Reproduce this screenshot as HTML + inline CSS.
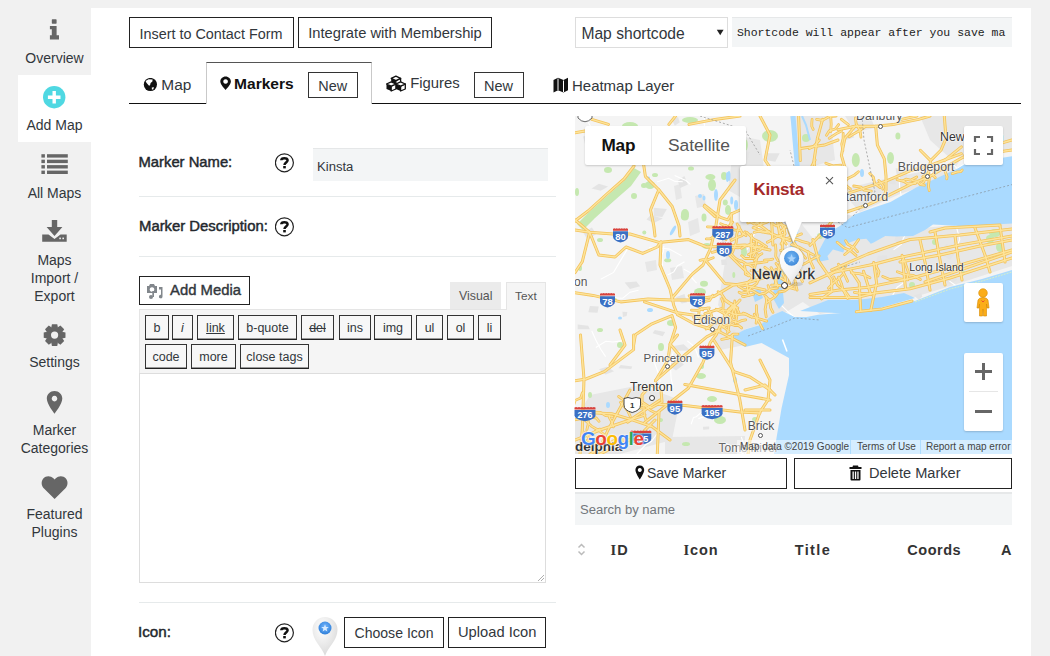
<!DOCTYPE html>
<html><head><meta charset="utf-8">
<style>
*{box-sizing:border-box;margin:0;padding:0}
html,body{width:1050px;height:656px;overflow:hidden;background:#f1f1f1;font-family:"Liberation Sans",sans-serif;color:#32373c;position:relative}
.a{position:absolute}
.t{position:absolute;line-height:1;white-space:nowrap;color:#32373c}
.qb{position:absolute;border:1px solid #333;border-bottom-color:#222;background:#f7f7f7;font-size:12.5px;text-align:center;line-height:24.5px;color:#32373c;box-shadow:inset 0 -1px 0 #999}
.ml{position:absolute;white-space:nowrap;color:#555;text-shadow:0 0 2px #fff,0 0 2px #fff,0 0 1px #fff}
.cd{position:absolute;width:5px;height:5px;border:1px solid #555;border-radius:50%;background:#fff}
.mctl{background:#fff;border-radius:2px;box-shadow:0 1px 2px rgba(0,0,0,0.18)}
.att{top:441px;font-size:10px;color:#444;white-space:nowrap}
</style></head><body>
<div class="a" style="left:91px;top:8px;width:940px;height:648px;background:#fff"></div>
<div class="a" style="left:18px;top:75px;width:73px;height:67px;background:#fff"></div>
<div class="t" style="left:0;width:109px;text-align:center;top:50.6px;font-size:14px;color:#32373c">Overview</div>
<div class="t" style="left:0;width:109px;text-align:center;top:118.1px;font-size:14px;color:#32373c">Add Map</div>
<div class="t" style="left:0;width:109px;text-align:center;top:185.9px;font-size:14px;color:#32373c">All Maps</div>
<div class="t" style="left:0;width:109px;text-align:center;top:253.3px;font-size:14px;color:#32373c">Maps</div>
<div class="t" style="left:0;width:109px;text-align:center;top:271.0px;font-size:14px;color:#32373c">Import /</div>
<div class="t" style="left:0;width:109px;text-align:center;top:288.6px;font-size:14px;color:#32373c">Export</div>
<div class="t" style="left:0;width:109px;text-align:center;top:355.4px;font-size:14px;color:#32373c">Settings</div>
<div class="t" style="left:0;width:109px;text-align:center;top:422.8px;font-size:14px;color:#32373c">Marker</div>
<div class="t" style="left:0;width:109px;text-align:center;top:440.9px;font-size:14px;color:#32373c">Categories</div>
<div class="t" style="left:0;width:109px;text-align:center;top:507.0px;font-size:14px;color:#32373c">Featured</div>
<div class="t" style="left:0;width:109px;text-align:center;top:525.2px;font-size:14px;color:#32373c">Plugins</div>
<svg class="a" style="left:0;top:0" width="91" height="656" viewBox="0 0 91 656">
<g fill="#666">
<rect x="51.8" y="19.3" width="4.8" height="4.4" rx="0.6"/>
<path d="M49.9,26 H56.6 V35.2 H59 V39.4 H49.9 V35.2 H51.8 V29.2 H49.9 Z"/>
<rect x="41.4" y="154.2" width="3.5" height="3.4"/><rect x="47" y="154.2" width="20.8" height="3.4"/>
<rect x="41.4" y="159.7" width="3.5" height="3.4"/><rect x="47" y="159.7" width="20.8" height="3.4"/>
<rect x="41.4" y="165.1" width="3.5" height="3.4"/><rect x="47" y="165.1" width="20.8" height="3.4"/>
<rect x="41.4" y="170.6" width="3.5" height="3.4"/><rect x="47" y="170.6" width="20.8" height="3.4"/>
<path d="M51.8,220 H57.2 V227 H62.4 L54.5,236 L46.6,227 H51.8 Z"/>
<path d="M42.2,234.5 H48.5 L54.5,239 L60.5,234.5 H66.7 V241.8 H42.2 Z"/>
<path d="M54.5,391 C50.2,391 46.8,394.3 46.8,398.6 C46.8,404 54.5,413.8 54.5,413.8 C54.5,413.8 62.3,404 62.3,398.6 C62.3,394.3 58.8,391 54.5,391 Z M54.5,395.8 A2.8,2.8 0 1 1 54.49,395.8 Z" fill-rule="evenodd"/>
<path d="M54.6,499 L44,488.5 C41.3,485.8 40.8,481.6 43.3,478.5 C45.9,475.4 50.6,475.4 53.4,478.3 L54.6,479.5 L55.8,478.3 C58.6,475.4 63.3,475.4 65.9,478.5 C68.4,481.6 67.9,485.8 65.2,488.5 Z"/>
</g>
<rect x="59.3" y="237.6" width="1.6" height="1.6" fill="#f1f1f1"/><rect x="62.4" y="237.6" width="1.6" height="1.6" fill="#f1f1f1"/>
<circle cx="54.2" cy="97.2" r="11.2" fill="#4fd8e2"/>
<path d="M47.9,97.2 H60.5 M54.2,90.9 V103.5" stroke="#fff" stroke-width="3.4"/>
</svg>
<svg class="a" style="left:0;top:0" width="91" height="656"><path d="M65.48,332.44 L65.48,337.76 L62.09,338.44 L62.26,338.03 L64.18,340.91 L60.41,344.68 L57.53,342.76 L57.94,342.59 L57.26,345.98 L51.94,345.98 L51.26,342.59 L51.67,342.76 L48.79,344.68 L45.02,340.91 L46.94,338.03 L47.11,338.44 L43.72,337.76 L43.72,332.44 L47.11,331.76 L46.94,332.17 L45.02,329.29 L48.79,325.52 L51.67,327.44 L51.26,327.61 L51.94,324.22 L57.26,324.22 L57.94,327.61 L57.53,327.44 L60.41,325.52 L64.18,329.29 L62.26,332.17 L62.09,331.76 Z M58.2,335.1 A3.6,3.6 0 1 0 51.0,335.1 A3.6,3.6 0 1 0 58.2,335.1 Z" fill="#666" fill-rule="evenodd"/></svg>
<div class="a" style="left:129px;top:17px;width:165px;height:31px;border:1px solid #222;background:#fff"></div>
<div class="t" style="left:139.50px;top:26.65px;font-size:14.393px;">Insert to Contact Form</div>
<div class="a" style="left:298px;top:17px;width:194px;height:31px;border:1px solid #222;background:#fff"></div>
<div class="t" style="left:308.20px;top:26.05px;font-size:14.745px;">Integrate with Membership</div>
<div class="a" style="left:575px;top:17px;width:153px;height:31px;border:1px solid #ddd;background:#fff"></div>
<div class="t" style="left:581.40px;top:26.41px;font-size:15.646px;">Map shortcode</div>
<svg class="a" style="left:716px;top:29px" width="9" height="7"><path d="M0.8,0.8 H7.6 L4.2,6.2 Z" fill="#222"/></svg>
<div class="a" style="left:732px;top:17px;width:280px;height:30px;background:#f3f5f6;border-top:1px solid #e6e8e9"></div>
<div class="t" style="left:736.90px;top:27.16px;font-size:11.488px;font-family:'Liberation Mono',monospace;color:#222;white-space:pre">Shortcode will appear after you save ma</div>
<div class="a" style="left:129px;top:103px;width:78px;height:1px;background:#111"></div>
<div class="a" style="left:371px;top:103px;width:650px;height:1px;background:#111"></div>
<div class="a" style="left:206px;top:62px;width:166px;height:42px;border:1px solid #c9c9c9;border-top:1px solid #555;border-bottom:none;background:#fff"></div>
<svg class="a" style="left:143px;top:78px" width="15" height="15" viewBox="0 0 15 15"><circle cx="7.4" cy="6.5" r="6.6" fill="#111"/><path d="M2.6,3 L5.6,1.3 L9.6,1.6 L9.4,3.6 L7.6,5 L7,7.4 L5.8,7.6 L3.4,4.8 Z" fill="#fff"/><path d="M8.8,9.4 L11,9.2 L10.2,11.4 L8.9,11.5 Z" fill="#fff"/></svg>
<div class="t" style="left:161.30px;top:76.98px;font-size:15.437px;">Map</div>
<svg class="a" style="left:220px;top:76px" width="12" height="15" viewBox="0 0 12 15"><path d="M5.6,0.4 C2.6,0.4 0.3,2.7 0.3,5.5 C0.3,8.8 5.6,13.9 5.6,13.9 C5.6,13.9 10.9,8.8 10.9,5.5 C10.9,2.7 8.6,0.4 5.6,0.4 Z M5.6,3.2 A2.3,2.3 0 1 1 5.59,3.2 Z" fill="#111" fill-rule="evenodd"/></svg>
<div class="t" style="left:234.10px;top:75.69px;font-size:15.542px;font-weight:bold;color:#111">Markers</div>
<div class="a" style="left:308px;top:72px;width:50px;height:26px;border:1px solid #333;background:#fff"></div>
<div class="t" style="left:318.30px;top:79.12px;font-size:14.424px;">New</div>
<svg class="a" style="left:386px;top:75px" width="20" height="17" viewBox="0 0 20 17"><path d="M5.2,3.4000000000000004 L9.9,5.6000000000000005 L9.9,10.4 L5.2,8.4 Z" fill="#111"/><path d="M9.9,5.6000000000000005 L14.600000000000001,3.4000000000000004 L14.600000000000001,8.4 L9.9,10.4 Z" fill="#fff" stroke="#111" stroke-width="1.3" stroke-linejoin="round"/><path d="M5.2,3.4000000000000004 L9.9,1.2000000000000002 L14.600000000000001,3.4000000000000004 L9.9,5.6000000000000005 Z" fill="#fff" stroke="#111" stroke-width="1.3" stroke-linejoin="round"/><path d="M0.5,9 L5.2,11.2 L5.2,16 L0.5,14 Z" fill="#111"/><path d="M5.2,11.2 L9.9,9 L9.9,14 L5.2,16 Z" fill="#fff" stroke="#111" stroke-width="1.3" stroke-linejoin="round"/><path d="M0.5,9 L5.2,6.8 L9.9,9 L5.2,11.2 Z" fill="#fff" stroke="#111" stroke-width="1.3" stroke-linejoin="round"/><path d="M9.899999999999999,9 L14.6,11.2 L14.6,16 L9.899999999999999,14 Z" fill="#111"/><path d="M14.6,11.2 L19.3,9 L19.3,14 L14.6,16 Z" fill="#fff" stroke="#111" stroke-width="1.3" stroke-linejoin="round"/><path d="M9.899999999999999,9 L14.6,6.8 L19.3,9 L14.6,11.2 Z" fill="#fff" stroke="#111" stroke-width="1.3" stroke-linejoin="round"/></svg>
<div class="t" style="left:410.20px;top:76.33px;font-size:14.899px;">Figures</div>
<div class="a" style="left:474px;top:72px;width:50px;height:26px;border:1px solid #333;background:#fff"></div>
<div class="t" style="left:484.00px;top:78.94px;font-size:14.519px;">New</div>
<svg class="a" style="left:553px;top:77px" width="16" height="16" viewBox="0 0 16 16"><path d="M0.5,3 L5,0.8 L10.5,3 L15,0.8 V13.2 L10.5,15.4 L5,13.2 L0.5,15.4 Z" fill="#111"/><path d="M5,1.5 V13 M10.5,3.5 V15" stroke="#fff" stroke-width="1"/></svg>
<div class="t" style="left:572.00px;top:78.57px;font-size:14.970px;">Heatmap Layer</div>
<div class="t" style="left:138.50px;top:154.90px;font-size:14.805px;-webkit-text-stroke:0.45px #23282d;color:#23282d">Marker Name:</div>
<svg class="a" style="left:274.5px;top:152.8px" width="20" height="20" viewBox="0 0 20 20"><circle cx="9.4" cy="9.8" r="9" fill="#fff" stroke="#222" stroke-width="1.2"/><path d="M6.3,7.3 C6.3,4.4 12.6,4.4 12.6,7.3 C12.6,9.4 9.5,9.6 9.5,12" fill="none" stroke="#111" stroke-width="2.5"/><rect x="8.2" y="13" width="2.6" height="2.4" fill="#111"/></svg>
<div class="a" style="left:313px;top:148px;width:235px;height:33px;background:#f3f5f6;border-top:1px solid #e5e7e8"></div>
<div class="t" style="left:317.00px;top:159.83px;font-size:13.087px;color:#32373c">Kinsta</div>
<div class="a" style="left:139px;top:196px;width:417px;height:1px;background:#e6eaeb"></div>
<div class="t" style="left:139.00px;top:218.85px;font-size:14.876px;-webkit-text-stroke:0.45px #23282d;color:#23282d">Marker Description:</div>
<svg class="a" style="left:274.5px;top:216.8px" width="20" height="20" viewBox="0 0 20 20"><circle cx="9.4" cy="9.8" r="9" fill="#fff" stroke="#222" stroke-width="1.2"/><path d="M6.3,7.3 C6.3,4.4 12.6,4.4 12.6,7.3 C12.6,9.4 9.5,9.6 9.5,12" fill="none" stroke="#111" stroke-width="2.5"/><rect x="8.2" y="13" width="2.6" height="2.4" fill="#111"/></svg>
<div class="a" style="left:139px;top:256px;width:417px;height:1px;background:#e6eaeb"></div>
<div class="a" style="left:139px;top:276px;width:111px;height:29px;border:1px solid #222;background:#fff"></div>
<svg class="a" style="left:146px;top:283px" width="18" height="17" viewBox="0 0 18 17"><g fill="#82878c"><path d="M1,3 H3 L4,1 H8 L9,3 H11 V10 H1 Z M6,4.2 A2.3,2.3 0 1 0 6.01,4.2 Z" fill-rule="evenodd"/><path d="M13,4 H16.5 V13.5 A1.8,1.8 0 1 1 15,11.8 V6.5 H13 Z"/><circle cx="5" cy="14" r="2"/><path d="M6.3,8 H8 V14 H6.3 Z"/></g></svg>
<div class="t" style="left:170.10px;top:283.48px;font-size:14.831px;-webkit-text-stroke:0.4px #32373c;color:#32373c">Add Media</div>
<div class="a" style="left:450px;top:282px;width:51px;height:27px;background:#ebebeb"></div>
<div class="t" style="left:459.00px;top:289.72px;font-size:12.375px;color:#555">Visual</div>
<div class="a" style="left:139px;top:309px;width:407px;height:65px;background:#f5f5f5;border:1px solid #e5e5e5;border-bottom:none"></div>
<div class="a" style="left:506px;top:282px;width:40px;height:28px;background:#f5f5f5;border:1px solid #e5e5e5;border-bottom:none"></div>
<div class="t" style="left:515.10px;top:291.19px;font-size:11.811px;color:#555">Text</div>
<div class="qb" style="left:145px;top:315px;width:24px;height:25px;">b</div>
<div class="qb" style="left:172px;top:315px;width:21px;height:25px;font-style:italic">i</div>
<div class="qb" style="left:197px;top:315px;width:37px;height:25px;text-decoration:underline">link</div>
<div class="qb" style="left:238px;top:315px;width:59px;height:25px;">b-quote</div>
<div class="qb" style="left:301px;top:315px;width:33px;height:25px;text-decoration:line-through">del</div>
<div class="qb" style="left:339px;top:315px;width:32px;height:25px;">ins</div>
<div class="qb" style="left:374px;top:315px;width:38px;height:25px;">img</div>
<div class="qb" style="left:416px;top:315px;width:27px;height:25px;">ul</div>
<div class="qb" style="left:447px;top:315px;width:27px;height:25px;">ol</div>
<div class="qb" style="left:478px;top:315px;width:23px;height:25px;">li</div>
<div class="qb" style="left:145px;top:344px;width:42px;height:25px">code</div>
<div class="qb" style="left:191px;top:344px;width:45px;height:25px">more</div>
<div class="qb" style="left:240px;top:344px;width:69px;height:25px">close tags</div>
<div class="a" style="left:139px;top:373px;width:407px;height:210px;border:1px solid #ddd;background:#fff"></div>
<svg class="a" style="left:537px;top:574px" width="8" height="8"><path d="M7,1 L1,7 M7,4 L4,7" stroke="#999" stroke-width="0.8"/></svg>
<div class="a" style="left:139px;top:602px;width:417px;height:1px;background:#e6eaeb"></div>
<div class="t" style="left:138.00px;top:624.07px;font-size:15.202px;-webkit-text-stroke:0.45px #23282d;color:#23282d">Icon:</div>
<svg class="a" style="left:274.5px;top:622.5px" width="20" height="20" viewBox="0 0 20 20"><circle cx="9.4" cy="9.8" r="9" fill="#fff" stroke="#222" stroke-width="1.2"/><path d="M6.3,7.3 C6.3,4.4 12.6,4.4 12.6,7.3 C12.6,9.4 9.5,9.6 9.5,12" fill="none" stroke="#111" stroke-width="2.5"/><rect x="8.2" y="13" width="2.6" height="2.4" fill="#111"/></svg>
<svg class="a" style="left:311px;top:616px" width="28" height="40" viewBox="0 0 28 40"><defs><radialGradient id="pg2" cx="0.4" cy="0.3" r="0.8"><stop offset="0" stop-color="#fff"/><stop offset="1" stop-color="#d5d5d5"/></radialGradient><radialGradient id="bg2" cx="0.5" cy="0.4" r="0.6"><stop offset="0" stop-color="#72b6ff"/><stop offset="1" stop-color="#2f7fd8"/></radialGradient></defs><path d="M14,40 C10.5,30 1.5,25 1.5,13.5 A12.5,12.5 0 0 1 26.5,13.5 C26.5,25 17.5,30 14,40 Z" fill="url(#pg2)"/><circle cx="14" cy="12" r="6.5" fill="url(#bg2)"/><path d="M14,8.2 L15,11 L17.8,11.1 L15.6,12.8 L16.4,15.6 L14,14 L11.6,15.6 L12.4,12.8 L10.2,11.1 L13,11 Z" fill="#d8ebff"/></svg>
<div class="a" style="left:344px;top:617px;width:100px;height:31px;border:1px solid #222;background:#fff"></div>
<div class="t" style="left:354.50px;top:626.21px;font-size:14.075px;">Choose Icon</div>
<div class="a" style="left:448px;top:617px;width:98px;height:31px;border:1px solid #222;background:#fff"></div>
<div class="t" style="left:458.00px;top:625.38px;font-size:14.715px;">Upload Icon</div>
<svg class="a" style="left:575px;top:116px" width="437" height="338" viewBox="575 116 437 338"><rect x="575" y="116" width="437" height="338" fill="#f4f4f4"/><polygon points="735.0,135.0 760.0,140.0 765.0,175.0 745.0,200.0 728.0,190.0" fill="#e7e7e7" /><polygon points="688.0,222.0 698.0,218.0 700.0,232.0 690.0,236.0" fill="#e7e7e7" /><polygon points="674.0,186.0 680.0,184.0 682.0,198.0 676.0,200.0" fill="#e7e7e7" /><polygon points="695.0,196.0 704.0,194.0 706.0,206.0 697.0,208.0" fill="#e7e7e7" /><polygon points="670.0,268.0 682.0,266.0 684.0,278.0 672.0,280.0" fill="#e7e7e7" /><polygon points="645.0,262.0 656.0,260.0 657.0,270.0 647.0,272.0" fill="#e7e7e7" /><polygon points="732.0,222.0 800.0,222.0 822.0,250.0 806.0,300.0 770.0,322.0 735.0,332.0 718.0,305.0 725.0,262.0" fill="#e7e7e7" /><polygon points="815.0,236.0 900.0,230.0 1012.0,220.0 1012.0,266.0 960.0,283.0 905.0,300.0 820.0,314.0 800.0,300.0" fill="#e7e7e7" /><polygon points="840.0,190.0 880.0,180.0 930.0,170.0 960.0,160.0 950.0,176.0 900.0,194.0 860.0,212.0" fill="#e7e7e7" /><polygon points="845.0,116.0 870.0,116.0 875.0,128.0 855.0,132.0" fill="#e7e7e7" /><polygon points="790.0,116.0 830.0,116.0 835.0,160.0 800.0,170.0" fill="#e7e7e7" /><polygon points="590.0,395.0 640.0,385.0 680.0,400.0 672.0,440.0 620.0,454.0 575.0,454.0 575.0,420.0" fill="#e7e7e7" /><polygon points="665.0,437.0 745.0,436.0 745.0,454.0 665.0,454.0" fill="#e7e7e7" /><polygon points="920.0,116.0 1012.0,116.0 1012.0,150.0 950.0,158.0 930.0,140.0" fill="#e7e7e7" /><polygon points="705.0,320.0 745.0,310.0 745.0,345.0 720.0,350.0" fill="#e7e7e7" /><polygon points="681.8,303.5 675.6,297.3 684.5,294.0 686.9,302.5" fill="#e4e4e4" /><polygon points="614.1,371.3 605.6,374.6 599.0,369.2 606.8,366.8" fill="#e4e4e4" /><polygon points="852.2,223.9 842.0,220.1 844.7,214.3 855.9,216.4" fill="#e4e4e4" /><polygon points="822.6,214.5 826.0,209.1 829.4,214.6 825.8,222.2" fill="#e4e4e4" /><polygon points="719.4,146.2 708.4,147.3 707.3,143.8 717.7,143.0" fill="#e4e4e4" /><polygon points="800.6,264.5 791.7,265.3 794.8,259.3 804.3,260.4" fill="#e4e4e4" /><polygon points="595.2,144.1 585.1,144.2 583.1,136.5 595.0,133.4" fill="#e4e4e4" /><polygon points="688.0,184.6 680.1,187.9 677.7,181.1 684.3,175.9" fill="#e4e4e4" /><polygon points="653.7,216.2 653.7,207.8 666.9,208.9 662.3,217.0" fill="#e4e4e4" /><polygon points="676.0,370.4 667.9,365.0 678.3,359.7 684.0,364.6" fill="#e4e4e4" /><polygon points="653.9,223.0 646.5,219.4 650.6,214.9 662.9,218.4" fill="#e4e4e4" /><polygon points="589.9,329.3 577.7,329.2 577.7,324.6 588.2,325.7" fill="#e4e4e4" /><polygon points="736.0,336.2 728.3,337.0 724.8,331.1 735.2,329.9" fill="#e4e4e4" /><polygon points="888.1,260.9 876.2,261.0 877.6,256.1 886.8,255.2" fill="#e4e4e4" /><polygon points="622.9,317.0 622.4,311.8 627.4,312.1 626.6,315.9" fill="#e4e4e4" /><polygon points="631.2,368.9 618.5,368.2 620.7,365.1 632.3,366.5" fill="#e4e4e4" /><polygon points="897.4,178.8 895.6,168.3 905.3,169.0 907.3,176.1" fill="#e4e4e4" /><polygon points="673.8,350.7 673.6,346.0 683.6,344.3 690.4,350.4" fill="#e4e4e4" /><polygon points="950.2,259.7 939.2,253.6 946.7,243.8 955.2,252.8" fill="#e4e4e4" /><polygon points="620.6,153.1 609.5,152.9 615.5,147.8 624.6,147.7" fill="#e4e4e4" /><polygon points="963.8,154.6 966.6,147.6 978.4,148.6 978.2,155.5" fill="#e4e4e4" /><polygon points="652.6,333.3 654.8,329.9 665.1,331.9 662.8,336.3" fill="#e4e4e4" /><polygon points="894.2,241.1 895.9,234.7 902.5,237.9 900.1,242.4" fill="#e4e4e4" /><polygon points="888.7,183.5 889.9,177.8 894.9,179.0 895.8,184.6" fill="#e4e4e4" /><polygon points="957.3,279.8 949.9,284.3 942.2,279.9 952.1,273.1" fill="#e4e4e4" /><polygon points="854.5,137.3 846.4,140.0 842.7,135.5 850.8,133.6" fill="#e4e4e4" /><polygon points="908.7,280.7 904.5,282.3 901.2,279.7 907.5,277.6" fill="#e4e4e4" /><polygon points="679.8,122.3 674.8,125.8 671.9,120.0 678.0,116.9" fill="#e4e4e4" /><polygon points="756.4,254.4 751.9,258.0 750.1,245.6 755.0,243.9" fill="#e4e4e4" /><polygon points="847.7,235.4 849.7,228.1 853.7,234.8 850.1,238.1" fill="#e4e4e4" /><polygon points="714.2,322.2 701.4,322.7 705.7,317.5 717.6,317.9" fill="#e4e4e4" /><polygon points="784.9,213.5 783.7,206.9 788.1,202.2 791.3,211.9" fill="#e4e4e4" /><polygon points="720.0,243.4 723.3,238.9 727.3,240.6 723.1,246.3" fill="#e4e4e4" /><polygon points="922.3,296.5 918.8,299.8 914.0,295.5 921.2,293.2" fill="#e4e4e4" /><polygon points="765.3,159.9 765.7,153.2 779.7,153.3 775.3,161.7" fill="#e4e4e4" /><polygon points="727.1,265.1 721.6,265.0 721.0,259.8 726.4,259.3" fill="#e4e4e4" /><polygon points="703.2,429.8 703.0,426.7 709.2,426.4 709.1,429.3" fill="#e4e4e4" /><polygon points="957.2,247.4 952.7,242.4 955.9,240.0 960.8,242.6" fill="#e4e4e4" /><polygon points="591.6,188.6 598.8,183.8 608.1,186.6 600.7,190.8" fill="#e4e4e4" /><polygon points="760.2,330.4 759.8,322.0 768.7,323.0 767.3,334.3" fill="#e4e4e4" /><polygon points="754.8,293.7 754.0,289.0 759.6,288.5 761.7,293.6" fill="#e4e4e4" /><polygon points="597.5,312.7 588.3,312.2 589.9,306.0 598.8,306.6" fill="#e4e4e4" /><polygon points="718.4,251.0 713.9,251.7 712.7,248.3 719.9,247.1" fill="#e4e4e4" /><polygon points="691.2,301.6 695.1,297.6 698.1,298.9 694.9,303.8" fill="#e4e4e4" /><polygon points="748.1,159.4 740.4,162.0 741.7,150.9 749.6,151.8" fill="#e4e4e4" /><polygon points="587.6,240.1 583.0,232.0 591.9,227.6 596.2,234.1" fill="#e4e4e4" /><polygon points="1010.4,256.1 1000.1,258.0 993.5,254.8 1001.1,252.3" fill="#e4e4e4" /><polygon points="629.9,288.9 624.6,282.5 636.4,281.5 640.1,286.2" fill="#e4e4e4" /><polyline points="741.3,436.8 743.3,442.9 747.8,446.1 748.1,453.2" fill="none" stroke="#fff" stroke-width="1.1"/><polyline points="760.5,224.4 752.7,236.7 749.4,246.2 740.6,258.3" fill="none" stroke="#fff" stroke-width="1.1"/><polyline points="704.2,112.3 704.4,125.5 703.4,135.7 700.5,146.3" fill="none" stroke="#fff" stroke-width="1.1"/><polyline points="955.7,224.4 959.8,239.2 956.4,248.2 959.0,260.4" fill="none" stroke="#fff" stroke-width="1.1"/><polyline points="930.0,170.8 936.0,178.4 940.2,181.3 948.9,191.1" fill="none" stroke="#fff" stroke-width="1.1"/><polyline points="627.5,248.9 620.5,260.6 613.6,272.4 600.7,279.2" fill="none" stroke="#fff" stroke-width="1.1"/><polyline points="649.1,247.7 662.0,248.3 669.3,249.1 681.6,255.7" fill="none" stroke="#fff" stroke-width="1.1"/><polyline points="827.7,211.2 815.8,216.0 804.3,214.4 796.8,214.0" fill="none" stroke="#fff" stroke-width="1.1"/><polyline points="663.3,130.8 665.0,138.0 671.0,141.2 672.4,150.3" fill="none" stroke="#fff" stroke-width="1.1"/><polyline points="656.8,182.0 668.6,178.3 675.1,181.4 682.8,181.7" fill="none" stroke="#fff" stroke-width="1.1"/><polyline points="687.3,340.9 692.2,344.9 695.9,350.0 698.5,357.5" fill="none" stroke="#fff" stroke-width="1.1"/><polyline points="651.5,355.2 653.7,360.7 658.8,374.5 660.2,381.8" fill="none" stroke="#fff" stroke-width="1.1"/><polyline points="703.0,410.9 696.4,416.7 693.5,417.5 691.1,424.2" fill="none" stroke="#fff" stroke-width="1.1"/><polyline points="638.5,290.3 630.0,292.2 622.8,298.2 612.5,297.9" fill="none" stroke="#fff" stroke-width="1.1"/><polyline points="726.4,411.3 716.1,411.5 702.8,417.2 698.3,418.6" fill="none" stroke="#fff" stroke-width="1.1"/><polyline points="774.8,295.0 779.7,303.7 788.6,312.3 795.4,318.0" fill="none" stroke="#fff" stroke-width="1.1"/><polyline points="663.8,246.0 663.3,251.9 661.7,255.2 662.5,265.9" fill="none" stroke="#fff" stroke-width="1.1"/><polyline points="949.5,281.1 955.2,285.2 957.0,292.6 955.7,296.6" fill="none" stroke="#fff" stroke-width="1.1"/><polyline points="995.2,166.2 997.8,178.6 994.3,188.3 988.4,196.2" fill="none" stroke="#fff" stroke-width="1.1"/><polyline points="899.0,176.4 899.8,188.9 902.2,200.9 904.6,216.1" fill="none" stroke="#fff" stroke-width="1.1"/><polyline points="909.2,274.2 902.9,283.3 897.2,287.2 891.2,297.9" fill="none" stroke="#fff" stroke-width="1.1"/><polyline points="673.3,352.1 670.2,361.0 671.1,378.1 673.1,387.8" fill="none" stroke="#fff" stroke-width="1.1"/><polyline points="658.8,431.5 651.5,441.3 645.7,444.8 636.7,454.2" fill="none" stroke="#fff" stroke-width="1.1"/><polyline points="953.4,164.7 957.2,168.5 963.8,164.2 970.0,162.8" fill="none" stroke="#fff" stroke-width="1.1"/><polyline points="694.4,345.5 701.6,346.8 705.1,351.2 709.7,354.3" fill="none" stroke="#fff" stroke-width="1.1"/><polyline points="684.5,261.8 677.3,265.9 673.8,271.9 667.6,275.0" fill="none" stroke="#fff" stroke-width="1.1"/><polyline points="586.2,118.6 590.6,126.4 593.2,133.1 595.6,137.0" fill="none" stroke="#fff" stroke-width="1.1"/><polyline points="721.2,135.0 716.8,138.7 708.6,141.3 704.6,147.1" fill="none" stroke="#fff" stroke-width="1.1"/><polyline points="724.6,443.1 735.8,447.6 738.8,451.3 747.3,456.2" fill="none" stroke="#fff" stroke-width="1.1"/><polyline points="591.7,330.7 595.8,339.9 600.7,349.3 605.6,356.6" fill="none" stroke="#fff" stroke-width="1.1"/><polyline points="673.8,137.4 666.4,141.7 660.1,151.0 655.3,154.8" fill="none" stroke="#fff" stroke-width="1.1"/><polyline points="623.1,340.6 612.9,342.0 605.8,341.3 595.8,347.5" fill="none" stroke="#fff" stroke-width="1.1"/><polyline points="683.6,269.0 691.0,273.1 692.0,278.0 696.6,283.2" fill="none" stroke="#fff" stroke-width="1.1"/><polyline points="674.6,175.5 683.0,179.3 686.0,180.5 690.4,184.3" fill="none" stroke="#fff" stroke-width="1.1"/><polyline points="908.4,230.1 903.5,237.9 901.5,244.1 893.5,249.9" fill="none" stroke="#fff" stroke-width="1.1"/><polyline points="784.0,231.4 786.6,241.9 788.1,247.4 787.9,259.6" fill="none" stroke="#fff" stroke-width="1.1"/><polygon points="577.0,224.0 588.0,213.0 608.0,195.0 624.0,181.0 634.0,168.0 641.0,172.0 631.0,186.0 615.0,200.0 595.0,218.0 583.0,230.0" fill="#c5e8b0" /><ellipse cx="644" cy="185.6" rx="3" ry="2.5" fill="#c5e8b0" /><ellipse cx="684.8" cy="216.5" rx="4" ry="4" fill="#c5e8b0" /><ellipse cx="704" cy="217.6" rx="2.5" ry="4" fill="#c5e8b0" /><ellipse cx="710.4" cy="177" rx="5" ry="3" fill="#c5e8b0" /><ellipse cx="725.3" cy="202.6" rx="2.5" ry="3" fill="#c5e8b0" /><ellipse cx="667.7" cy="260.2" rx="3.5" ry="2" fill="#c5e8b0" /><ellipse cx="704" cy="283.7" rx="4" ry="3" fill="#c5e8b0" /><ellipse cx="733.8" cy="275" rx="1.5" ry="3" fill="#c5e8b0" /><ellipse cx="644.3" cy="232.5" rx="2" ry="2" fill="#c5e8b0" /><ellipse cx="746.6" cy="177" rx="3" ry="3" fill="#c5e8b0" /><ellipse cx="691" cy="168.5" rx="3" ry="2" fill="#c5e8b0" /><ellipse cx="600" cy="330" rx="3" ry="2" fill="#c5e8b0" /><ellipse cx="590" cy="395" rx="2" ry="3" fill="#c5e8b0" /><ellipse cx="615" cy="300" rx="2" ry="2" fill="#c5e8b0" /><ellipse cx="655" cy="175" rx="3" ry="2" fill="#c5e8b0" /><ellipse cx="855.8" cy="160" rx="4" ry="7" fill="#c5e8b0" /><ellipse cx="890.5" cy="158" rx="3.5" ry="6" fill="#c5e8b0" /><ellipse cx="897.9" cy="136" rx="2.5" ry="3.5" fill="#c5e8b0" /><ellipse cx="650" cy="185" rx="5" ry="4" fill="#c5e8b0" /><ellipse cx="685" cy="214" rx="4" ry="5" fill="#c5e8b0" /><ellipse cx="728" cy="210" rx="3" ry="5" fill="#c5e8b0" /><ellipse cx="707" cy="246" rx="5" ry="3" fill="#c5e8b0" /><ellipse cx="744" cy="252" rx="3" ry="5" fill="#c5e8b0" /><ellipse cx="700" cy="292" rx="6" ry="4" fill="#c5e8b0" /><ellipse cx="671" cy="323" rx="4" ry="3" fill="#c5e8b0" /><ellipse cx="661" cy="347" rx="3" ry="4" fill="#c5e8b0" /><ellipse cx="702" cy="366" rx="2" ry="3" fill="#c5e8b0" /><ellipse cx="701" cy="376" rx="5" ry="3" fill="#c5e8b0" /><ellipse cx="712" cy="399" rx="5" ry="3" fill="#c5e8b0" /><ellipse cx="720" cy="420" rx="6" ry="4" fill="#c5e8b0" /><ellipse cx="630" cy="126" rx="8" ry="4" fill="#c5e8b0" /><ellipse cx="690" cy="120" rx="8" ry="3" fill="#c5e8b0" /><ellipse cx="608" cy="170" rx="4" ry="3" fill="#c5e8b0" /><ellipse cx="634" cy="196" rx="3" ry="3" fill="#c5e8b0" /><ellipse cx="600" cy="240" rx="3" ry="2" fill="#c5e8b0" /><ellipse cx="580" cy="268" rx="2" ry="3" fill="#c5e8b0" /><ellipse cx="770" cy="136" rx="8" ry="6" fill="#c5e8b0" /><ellipse cx="745" cy="145" rx="3" ry="6" fill="#c5e8b0" /><ellipse cx="995" cy="233" rx="6" ry="4" fill="#c5e8b0" /><ellipse cx="990" cy="239" rx="4" ry="4" fill="#c5e8b0" /><ellipse cx="1000" cy="247" rx="4" ry="5" fill="#c5e8b0" /><ellipse cx="935" cy="242" rx="3" ry="3" fill="#c5e8b0" /><ellipse cx="962" cy="273" rx="3" ry="3" fill="#c5e8b0" /><ellipse cx="912" cy="285" rx="3" ry="3" fill="#c5e8b0" /><ellipse cx="858" cy="235" rx="4" ry="3" fill="#c5e8b0" /><ellipse cx="620" cy="345" rx="3" ry="3" fill="#c5e8b0" /><ellipse cx="638" cy="407" rx="4" ry="3" fill="#c5e8b0" /><ellipse cx="780" cy="343" rx="3" ry="4" fill="#c5e8b0" /><ellipse cx="755" cy="420" rx="3" ry="3" fill="#c5e8b0" /><ellipse cx="820" cy="236" rx="3" ry="3" fill="#c5e8b0" /><ellipse cx="712" cy="185" rx="4" ry="6" fill="#c5e8b0" /><ellipse cx="724" cy="176" rx="3" ry="4" fill="#c5e8b0" /><ellipse cx="740" cy="135" rx="4" ry="8" fill="#c5e8b0" /><ellipse cx="765" cy="180" rx="6" ry="4" fill="#c5e8b0" /><ellipse cx="806" cy="138" rx="4" ry="4" fill="#c5e8b0" /><ellipse cx="590" cy="150" rx="2" ry="4" fill="#c5e8b0" /><ellipse cx="577" cy="192" rx="2" ry="4" fill="#c5e8b0" /><ellipse cx="660" cy="420" rx="3" ry="2" fill="#c5e8b0" /><ellipse cx="686" cy="444" rx="4" ry="2" fill="#c5e8b0" /><polygon points="774.0,454.0 776.0,441.0 781.6,408.0 789.0,375.0 789.0,358.0 761.5,343.0 745.0,347.0 736.0,342.0 733.5,335.4 745.7,329.3 761.0,324.7 771.6,315.5 782.3,311.0 794.5,317.0 806.7,317.0 818.2,314.7 854.8,311.9 882.0,309.0 915.0,301.0 950.0,287.0 982.0,279.0 1012.0,270.0 1012.0,454.0" fill="#aadaff" /><polygon points="773.0,283.0 779.0,281.0 783.0,292.0 784.0,303.0 779.0,309.0 774.0,300.0" fill="#aadaff" /><polygon points="752.0,292.0 760.0,288.0 763.0,298.0 755.0,302.0" fill="#aadaff" /><polygon points="818.0,262.0 828.8,259.7 827.4,256.1 833.0,249.6 843.3,252.5 846.2,243.8 857.8,239.5 866.4,238.7 870.8,243.8 873.7,242.4 885.3,235.9 896.8,236.6 913.0,236.0 925.0,230.0 933.0,224.5 960.0,226.0 978.0,225.5 1012.0,223.5 1012.0,156.2 966.0,163.6 956.8,169.0 940.4,176.4 916.6,187.3 890.5,202.0 874.0,207.5 854.0,214.8 840.0,226.0 828.8,232.0 817.2,254.0 812.0,258.0" fill="#aadaff" /><polygon points="800.0,311.0 828.0,300.0 856.0,300.0 882.0,297.0 904.0,293.0 915.0,298.0 880.0,308.0 853.0,314.0" fill="#aadaff" /><polyline points="793.0,116.0 795.0,140.0 797.0,162.0 798.0,200.0 797.0,225.0 792.0,250.0 786.0,270.0 778.0,285.0" fill="none" stroke="#aadaff" stroke-width="5"/><polyline points="802.0,116.0 806.0,125.0 810.0,140.0" fill="none" stroke="#aadaff" stroke-width="2"/><ellipse cx="673" cy="230.4" rx="1.6" ry="5.5" fill="#aadaff" transform="rotate(30 673 230.4)"/><ellipse cx="727.4" cy="177" rx="1.5" ry="5" fill="#aadaff" /><ellipse cx="731.7" cy="200.5" rx="1.5" ry="4" fill="#aadaff" /><ellipse cx="648.5" cy="178" rx="1.5" ry="1.5" fill="#aadaff" /><ellipse cx="716" cy="195" rx="2" ry="6" fill="#aadaff" /><ellipse cx="712" cy="156" rx="2" ry="4" fill="#aadaff" /><ellipse cx="650" cy="310" rx="3" ry="2" fill="#aadaff" /><ellipse cx="668" cy="255" rx="2" ry="4" fill="#aadaff" /><ellipse cx="700" cy="196" rx="2" ry="2" fill="#aadaff" /><ellipse cx="862" cy="173" rx="2" ry="4" fill="#aadaff" /><ellipse cx="735" cy="380" rx="2" ry="3" fill="#aadaff" /><ellipse cx="705" cy="322" rx="2" ry="2" fill="#aadaff" /><ellipse cx="736" cy="205" rx="2" ry="5" fill="#aadaff" /><ellipse cx="729" cy="176" rx="1.5" ry="5" fill="#aadaff" /><ellipse cx="704" cy="198" rx="1.5" ry="2.5" fill="#aadaff" /><ellipse cx="620" cy="318" rx="2" ry="1.5" fill="#aadaff" /><ellipse cx="608" cy="405" rx="2" ry="3" fill="#aadaff" /><polyline points="782.5,339.6 787,351.5" fill="none" stroke="#fff" stroke-width="1.5"/><polyline points="575.0,230.0 589.6,232.3 613.0,234.0 630.0,234.0 659.0,242.4 688.5,239.6 706.7,247.0 745.0,245.0 770.0,250.0" fill="none" stroke="#f3c35c" stroke-width="3.0" stroke-linejoin="round" stroke-linecap="round"/><polyline points="589.6,232.3 598.8,255.0 615.0,257.0 626.0,247.0 642.7,253.4 657.3,247.0 661.0,242.0" fill="none" stroke="#f3c35c" stroke-width="3.0" stroke-linejoin="round" stroke-linecap="round"/><polyline points="589.6,232.3 582.3,261.6 575.0,272.6" fill="none" stroke="#f3c35c" stroke-width="3.0" stroke-linejoin="round" stroke-linecap="round"/><polyline points="589.6,232.3 580.0,224.0 575.0,220.0" fill="none" stroke="#f3c35c" stroke-width="3.0" stroke-linejoin="round" stroke-linecap="round"/><polyline points="575.0,292.7 593.0,295.4 620.7,301.9 648.0,299.0 672.0,300.0 690.0,300.0 714.0,296.4 732.4,285.4 750.0,282.0 770.0,276.0" fill="none" stroke="#f3c35c" stroke-width="3.0" stroke-linejoin="round" stroke-linecap="round"/><polyline points="661.0,242.0 660.0,265.0 670.0,289.0 673.8,305.5 677.5,314.7 694.0,323.8 720.0,332.0 745.0,345.0" fill="none" stroke="#f3c35c" stroke-width="3.0" stroke-linejoin="round" stroke-linecap="round"/><polyline points="672.0,298.0 692.0,274.4 703.0,265.0 710.4,248.8 714.0,234.0 716.0,225.0 720.0,200.0 735.0,180.0" fill="none" stroke="#f3c35c" stroke-width="3.0" stroke-linejoin="round" stroke-linecap="round"/><polyline points="644.5,301.9 677.5,312.8 703.0,316.5 720.0,322.0" fill="none" stroke="#f3c35c" stroke-width="3.0" stroke-linejoin="round" stroke-linecap="round"/><polyline points="633.6,345.0 635.4,334.8 651.9,323.8 672.0,315.6 675.6,327.5 670.0,345.0 668.0,360.0 655.5,380.7" fill="none" stroke="#f3c35c" stroke-width="3.0" stroke-linejoin="round" stroke-linecap="round"/><polyline points="706.7,261.6 725.0,283.6 745.0,285.4 765.0,290.0" fill="none" stroke="#f3c35c" stroke-width="3.0" stroke-linejoin="round" stroke-linecap="round"/><polyline points="721.4,247.0 739.7,265.3 755.0,280.0" fill="none" stroke="#f3c35c" stroke-width="3.0" stroke-linejoin="round" stroke-linecap="round"/><polyline points="575.0,221.0 588.0,211.0 608.0,193.0 624.0,179.0 634.0,166.0" fill="none" stroke="#f3c35c" stroke-width="3.0" stroke-linejoin="round" stroke-linecap="round"/><polyline points="643.7,165.0 645.4,176.4 658.8,189.8 650.5,209.9 653.8,226.0 655.0,236.0" fill="none" stroke="#f3c35c" stroke-width="3.0" stroke-linejoin="round" stroke-linecap="round"/><polyline points="658.8,189.8 672.2,206.5 679.0,226.0 680.0,236.0" fill="none" stroke="#f3c35c" stroke-width="3.0" stroke-linejoin="round" stroke-linecap="round"/><polyline points="591.8,119.4 608.5,124.4" fill="none" stroke="#f3c35c" stroke-width="3.0" stroke-linejoin="round" stroke-linecap="round"/><polyline points="575.0,132.8 585.0,131.0" fill="none" stroke="#f3c35c" stroke-width="3.0" stroke-linejoin="round" stroke-linecap="round"/><polyline points="668.9,124.4 675.6,116.0" fill="none" stroke="#f3c35c" stroke-width="3.0" stroke-linejoin="round" stroke-linecap="round"/><polyline points="689.0,124.4 715.0,119.4 740.0,116.0" fill="none" stroke="#f3c35c" stroke-width="3.0" stroke-linejoin="round" stroke-linecap="round"/><polyline points="704.1,206.5 715.0,216.6" fill="none" stroke="#f3c35c" stroke-width="3.0" stroke-linejoin="round" stroke-linecap="round"/><polyline points="704.6,205.2 720.5,217.4 727.8,219.9 731.5,213.8 740.0,210.0" fill="none" stroke="#f3c35c" stroke-width="3.0" stroke-linejoin="round" stroke-linecap="round"/><polyline points="731.5,213.8 730.2,238.2" fill="none" stroke="#f3c35c" stroke-width="3.0" stroke-linejoin="round" stroke-linecap="round"/><polyline points="755.9,222.0 770.5,233.3 790.0,240.6" fill="none" stroke="#f3c35c" stroke-width="3.0" stroke-linejoin="round" stroke-linecap="round"/><polyline points="771.7,222.0 772.9,245.0" fill="none" stroke="#f3c35c" stroke-width="3.0" stroke-linejoin="round" stroke-linecap="round"/><polyline points="644.5,422.8 688.5,388.0 703.0,362.4 710.4,342.3 716.0,335.0 725.0,316.0 740.0,300.0" fill="none" stroke="#f3c35c" stroke-width="3.0" stroke-linejoin="round" stroke-linecap="round"/><polyline points="655.5,380.7 684.8,355.0 706.7,336.8 720.0,330.0" fill="none" stroke="#f3c35c" stroke-width="3.0" stroke-linejoin="round" stroke-linecap="round"/><polyline points="659.0,404.5 684.8,405.4 739.7,411.9 760.0,413.0" fill="none" stroke="#f3c35c" stroke-width="3.0" stroke-linejoin="round" stroke-linecap="round"/><polyline points="684.8,384.4 745.0,395.4 770.0,400.0" fill="none" stroke="#f3c35c" stroke-width="3.0" stroke-linejoin="round" stroke-linecap="round"/><polyline points="580.5,335.0 584.0,379.0 582.3,430.0 580.0,454.0" fill="none" stroke="#f3c35c" stroke-width="3.0" stroke-linejoin="round" stroke-linecap="round"/><polyline points="633.6,335.0 633.6,349.6 604.3,371.6 586.0,379.0 575.0,380.7" fill="none" stroke="#f3c35c" stroke-width="3.0" stroke-linejoin="round" stroke-linecap="round"/><polyline points="677.5,335.0 670.0,344.0 679.3,355.0" fill="none" stroke="#f3c35c" stroke-width="3.0" stroke-linejoin="round" stroke-linecap="round"/><polyline points="732.4,335.0 730.5,362.4 739.7,399.0 745.0,430.0" fill="none" stroke="#f3c35c" stroke-width="3.0" stroke-linejoin="round" stroke-linecap="round"/><polyline points="714.0,340.5 734.0,371.6 750.0,377.0 770.0,390.0" fill="none" stroke="#f3c35c" stroke-width="3.0" stroke-linejoin="round" stroke-linecap="round"/><polyline points="575.0,411.9 611.6,413.7 630.0,419.2 651.9,426.5 670.0,440.0" fill="none" stroke="#f3c35c" stroke-width="3.0" stroke-linejoin="round" stroke-linecap="round"/><polyline points="659.0,411.9 657.3,454.0" fill="none" stroke="#f3c35c" stroke-width="3.0" stroke-linejoin="round" stroke-linecap="round"/><polyline points="630.0,390.0 608.0,430.0 597.0,454.0" fill="none" stroke="#f3c35c" stroke-width="3.0" stroke-linejoin="round" stroke-linecap="round"/><polyline points="575.0,440.0 600.0,430.0 630.0,420.0 660.0,400.0" fill="none" stroke="#f3c35c" stroke-width="3.0" stroke-linejoin="round" stroke-linecap="round"/><polyline points="600.0,454.0 640.0,435.0 655.0,420.0" fill="none" stroke="#f3c35c" stroke-width="3.0" stroke-linejoin="round" stroke-linecap="round"/><polyline points="642.0,395.0 651.0,385.0 661.0,390.0 662.0,402.0 651.0,408.0 642.0,402.0 642.0,395.0" fill="none" stroke="#f3c35c" stroke-width="3.0" stroke-linejoin="round" stroke-linecap="round"/><polyline points="760.0,360.0 770.0,380.0 768.0,400.0 760.0,412.0 750.0,440.0 748.0,454.0" fill="none" stroke="#f3c35c" stroke-width="3.0" stroke-linejoin="round" stroke-linecap="round"/><polyline points="745.0,390.0 765.0,385.0 775.0,395.0" fill="none" stroke="#f3c35c" stroke-width="3.0" stroke-linejoin="round" stroke-linecap="round"/><polyline points="745.0,410.0 770.0,410.0" fill="none" stroke="#f3c35c" stroke-width="3.0" stroke-linejoin="round" stroke-linecap="round"/><polyline points="620.0,330.0 625.0,345.0 610.0,365.0" fill="none" stroke="#f3c35c" stroke-width="3.0" stroke-linejoin="round" stroke-linecap="round"/><polyline points="590.0,454.0 615.0,440.0 640.0,440.0" fill="none" stroke="#f3c35c" stroke-width="3.0" stroke-linejoin="round" stroke-linecap="round"/><polyline points="846.6,212.0 867.1,205.1 886.0,196.6 910.0,184.6 930.6,176.0 947.7,165.7 963.2,157.1 1012.0,150.0" fill="none" stroke="#f3c35c" stroke-width="3.0" stroke-linejoin="round" stroke-linecap="round"/><polyline points="848.3,193.1 886.0,181.1 910.0,170.9 934.0,164.0 961.4,153.7" fill="none" stroke="#f3c35c" stroke-width="3.0" stroke-linejoin="round" stroke-linecap="round"/><polyline points="875.7,126.3 877.4,145.1 884.3,158.9 886.0,176.0 886.0,189.7 884.0,198.0" fill="none" stroke="#f3c35c" stroke-width="3.0" stroke-linejoin="round" stroke-linecap="round"/><polyline points="838.0,129.7 855.1,126.3 875.7,126.3 892.9,124.6 918.6,119.4 930.0,116.0" fill="none" stroke="#f3c35c" stroke-width="3.0" stroke-linejoin="round" stroke-linecap="round"/><polyline points="855.1,126.3 844.9,138.3 841.4,155.4 844.9,167.4 846.0,190.0" fill="none" stroke="#f3c35c" stroke-width="3.0" stroke-linejoin="round" stroke-linecap="round"/><polyline points="817.4,138.3 814.0,160.6 816.0,180.0" fill="none" stroke="#f3c35c" stroke-width="3.0" stroke-linejoin="round" stroke-linecap="round"/><polyline points="800.3,148.6 824.3,145.1 838.0,140.0" fill="none" stroke="#f3c35c" stroke-width="3.0" stroke-linejoin="round" stroke-linecap="round"/><polyline points="798.6,116.0 800.3,160.6" fill="none" stroke="#f3c35c" stroke-width="3.0" stroke-linejoin="round" stroke-linecap="round"/><polyline points="822.6,119.4 817.4,138.3" fill="none" stroke="#f3c35c" stroke-width="3.0" stroke-linejoin="round" stroke-linecap="round"/><polyline points="841.4,119.4 848.3,124.6" fill="none" stroke="#f3c35c" stroke-width="3.0" stroke-linejoin="round" stroke-linecap="round"/><polyline points="944.3,116.0 946.0,138.3 940.9,150.3 930.6,160.6" fill="none" stroke="#f3c35c" stroke-width="3.0" stroke-linejoin="round" stroke-linecap="round"/><polyline points="920.3,150.3 930.6,160.6 928.0,176.0" fill="none" stroke="#f3c35c" stroke-width="3.0" stroke-linejoin="round" stroke-linecap="round"/><polyline points="961.4,146.9 944.3,160.6" fill="none" stroke="#f3c35c" stroke-width="3.0" stroke-linejoin="round" stroke-linecap="round"/><polyline points="901.4,119.4 916.9,116.0" fill="none" stroke="#f3c35c" stroke-width="3.0" stroke-linejoin="round" stroke-linecap="round"/><polyline points="1012.0,140.0 985.0,148.0 965.0,155.0" fill="none" stroke="#f3c35c" stroke-width="3.0" stroke-linejoin="round" stroke-linecap="round"/><polyline points="760.0,116.0 770.0,135.0 765.0,160.0 775.0,175.0" fill="none" stroke="#f3c35c" stroke-width="3.0" stroke-linejoin="round" stroke-linecap="round"/><polyline points="780.0,232.0 800.0,215.0 820.0,205.0 835.0,190.0" fill="none" stroke="#f3c35c" stroke-width="3.0" stroke-linejoin="round" stroke-linecap="round"/><polyline points="760.0,225.0 770.0,210.0 790.0,200.0 805.0,180.0 815.0,160.0" fill="none" stroke="#f3c35c" stroke-width="3.0" stroke-linejoin="round" stroke-linecap="round"/><polyline points="810.0,282.9 831.7,272.8 853.4,268.4 875.0,264.0 896.8,258.3 910.0,255.4 960.0,245.0 1012.0,236.0" fill="none" stroke="#f3c35c" stroke-width="3.0" stroke-linejoin="round" stroke-linecap="round"/><polyline points="831.7,269.9 867.9,254.0 896.8,243.8 910.0,239.5 960.0,235.0 1012.0,229.0" fill="none" stroke="#f3c35c" stroke-width="3.0" stroke-linejoin="round" stroke-linecap="round"/><polyline points="810.0,294.5 838.9,290.1 867.9,287.2 896.8,281.4 910.0,278.5 960.0,265.0 1012.0,250.0" fill="none" stroke="#f3c35c" stroke-width="3.0" stroke-linejoin="round" stroke-linecap="round"/><polyline points="810.0,297.4 857.8,297.4 875.0,293.0 910.0,288.7 950.0,278.0 1012.0,258.0" fill="none" stroke="#f3c35c" stroke-width="3.0" stroke-linejoin="round" stroke-linecap="round"/><polyline points="856.3,311.8 882.4,308.9 912.0,301.0" fill="none" stroke="#f3c35c" stroke-width="3.0" stroke-linejoin="round" stroke-linecap="round"/><polyline points="850.5,269.9 859.2,282.9 860.7,310.4" fill="none" stroke="#f3c35c" stroke-width="3.0" stroke-linejoin="round" stroke-linecap="round"/><polyline points="873.7,262.6 876.6,282.9 870.8,310.4" fill="none" stroke="#f3c35c" stroke-width="3.0" stroke-linejoin="round" stroke-linecap="round"/><polyline points="863.5,271.3 870.8,294.5" fill="none" stroke="#f3c35c" stroke-width="3.0" stroke-linejoin="round" stroke-linecap="round"/><polyline points="902.6,259.7 905.5,288.7" fill="none" stroke="#f3c35c" stroke-width="3.0" stroke-linejoin="round" stroke-linecap="round"/><polyline points="812.9,239.5 818.7,261.2 831.7,280.0 831.7,291.6 821.6,298.8" fill="none" stroke="#f3c35c" stroke-width="3.0" stroke-linejoin="round" stroke-linecap="round"/><polyline points="810.0,245.3 815.8,239.5 823.0,232.2 828.8,225.0 840.0,212.0" fill="none" stroke="#f3c35c" stroke-width="3.0" stroke-linejoin="round" stroke-linecap="round"/><polyline points="935.0,232.0 940.0,260.0 945.0,285.0" fill="none" stroke="#f3c35c" stroke-width="3.0" stroke-linejoin="round" stroke-linecap="round"/><polyline points="975.0,228.0 985.0,255.0 990.0,272.0" fill="none" stroke="#f3c35c" stroke-width="3.0" stroke-linejoin="round" stroke-linecap="round"/><polyline points="1000.0,226.0 1005.0,262.0" fill="none" stroke="#f3c35c" stroke-width="3.0" stroke-linejoin="round" stroke-linecap="round"/><polyline points="920.0,240.0 925.0,262.0 930.0,290.0" fill="none" stroke="#f3c35c" stroke-width="3.0" stroke-linejoin="round" stroke-linecap="round"/><polyline points="955.0,236.0 958.0,258.0 962.0,280.0" fill="none" stroke="#f3c35c" stroke-width="3.0" stroke-linejoin="round" stroke-linecap="round"/><polyline points="900.0,262.0 940.0,255.0 980.0,246.0 1012.0,240.0" fill="none" stroke="#f3c35c" stroke-width="3.0" stroke-linejoin="round" stroke-linecap="round"/><polyline points="930.0,232.0 945.0,228.0 1000.0,225.0" fill="none" stroke="#f3c35c" stroke-width="3.0" stroke-linejoin="round" stroke-linecap="round"/><polyline points="925.0,282.0 960.0,270.0 1012.0,252.0" fill="none" stroke="#f3c35c" stroke-width="3.0" stroke-linejoin="round" stroke-linecap="round"/><polyline points="721.0,310.6 727.1,310.9 732.2,307.2 737.9,307.8" fill="none" stroke="#f3c35c" stroke-width="2.8" stroke-linejoin="round" stroke-linecap="round"/><polyline points="754.3,260.5 756.6,258.5 759.1,255.2 761.9,253.6" fill="none" stroke="#f3c35c" stroke-width="2.8" stroke-linejoin="round" stroke-linecap="round"/><polyline points="743.1,313.1 750.4,316.5 759.1,318.8 766.7,321.1" fill="none" stroke="#f3c35c" stroke-width="2.8" stroke-linejoin="round" stroke-linecap="round"/><polyline points="739.1,226.2 736.8,234.0 736.2,242.6 732.4,252.6" fill="none" stroke="#f3c35c" stroke-width="2.8" stroke-linejoin="round" stroke-linecap="round"/><polyline points="730.2,323.9 734.6,325.5 738.2,325.3 741.6,327.9" fill="none" stroke="#f3c35c" stroke-width="2.8" stroke-linejoin="round" stroke-linecap="round"/><polyline points="746.8,283.5 747.5,286.8 747.6,291.2 749.4,295.0" fill="none" stroke="#f3c35c" stroke-width="2.8" stroke-linejoin="round" stroke-linecap="round"/><polyline points="787.3,274.0 792.5,274.7 796.6,276.4 802.5,278.1" fill="none" stroke="#f3c35c" stroke-width="2.8" stroke-linejoin="round" stroke-linecap="round"/><polyline points="808.0,251.6 809.2,257.7 811.1,262.7 813.4,267.9" fill="none" stroke="#f3c35c" stroke-width="2.8" stroke-linejoin="round" stroke-linecap="round"/><polyline points="737.1,224.0 740.8,230.4 742.2,233.0 746.0,235.6" fill="none" stroke="#f3c35c" stroke-width="2.8" stroke-linejoin="round" stroke-linecap="round"/><polyline points="754.5,227.4 762.6,223.6 767.2,222.1 774.8,217.8" fill="none" stroke="#f3c35c" stroke-width="2.8" stroke-linejoin="round" stroke-linecap="round"/><polyline points="786.7,215.4 789.7,222.1 788.7,231.1 791.3,237.5" fill="none" stroke="#f3c35c" stroke-width="2.8" stroke-linejoin="round" stroke-linecap="round"/><polyline points="776.8,214.0 779.8,220.4 783.3,228.2 785.2,233.8" fill="none" stroke="#f3c35c" stroke-width="2.8" stroke-linejoin="round" stroke-linecap="round"/><polyline points="721.6,298.6 723.3,303.6 722.9,310.6 725.0,314.8" fill="none" stroke="#f3c35c" stroke-width="2.8" stroke-linejoin="round" stroke-linecap="round"/><polyline points="717.0,321.4 719.4,323.3 724.5,327.7 729.2,331.6" fill="none" stroke="#f3c35c" stroke-width="2.8" stroke-linejoin="round" stroke-linecap="round"/><polyline points="776.0,263.5 780.8,270.5 785.0,278.3 786.7,284.4" fill="none" stroke="#f3c35c" stroke-width="2.8" stroke-linejoin="round" stroke-linecap="round"/><polyline points="746.7,232.2 753.8,239.2 759.6,242.1 766.5,246.7" fill="none" stroke="#f3c35c" stroke-width="2.8" stroke-linejoin="round" stroke-linecap="round"/><polyline points="751.4,238.6 751.1,242.8 752.8,244.5 754.6,248.6" fill="none" stroke="#f3c35c" stroke-width="2.8" stroke-linejoin="round" stroke-linecap="round"/><polyline points="764.4,260.1 767.7,259.8 770.1,259.6 772.7,259.1" fill="none" stroke="#f3c35c" stroke-width="2.8" stroke-linejoin="round" stroke-linecap="round"/><polyline points="799.1,269.3 800.9,272.5 799.8,276.4 802.5,281.6" fill="none" stroke="#f3c35c" stroke-width="2.8" stroke-linejoin="round" stroke-linecap="round"/><polyline points="767.3,242.3 770.8,240.4 777.9,236.1 783.2,234.5" fill="none" stroke="#f3c35c" stroke-width="2.8" stroke-linejoin="round" stroke-linecap="round"/><polyline points="747.8,223.0 750.1,221.7 754.2,224.1 759.3,221.7" fill="none" stroke="#f3c35c" stroke-width="2.8" stroke-linejoin="round" stroke-linecap="round"/><polyline points="797.9,266.0 804.8,263.6 813.1,258.8 819.2,255.9" fill="none" stroke="#f3c35c" stroke-width="2.8" stroke-linejoin="round" stroke-linecap="round"/><polyline points="731.6,320.8 737.6,322.6 741.4,320.7 745.7,319.8" fill="none" stroke="#f3c35c" stroke-width="2.8" stroke-linejoin="round" stroke-linecap="round"/><polyline points="748.5,254.6 753.4,252.6 759.4,250.5 763.6,246.6" fill="none" stroke="#f3c35c" stroke-width="2.8" stroke-linejoin="round" stroke-linecap="round"/><polyline points="747.3,291.9 751.6,287.0 756.6,283.6 758.4,279.8" fill="none" stroke="#f3c35c" stroke-width="2.8" stroke-linejoin="round" stroke-linecap="round"/><polyline points="756.4,305.7 756.5,311.9 757.4,315.3 756.1,323.2" fill="none" stroke="#f3c35c" stroke-width="2.8" stroke-linejoin="round" stroke-linecap="round"/><polyline points="771.6,285.1 778.4,285.4 787.1,286.9 795.1,289.1" fill="none" stroke="#f3c35c" stroke-width="2.8" stroke-linejoin="round" stroke-linecap="round"/><polyline points="782.7,240.4 782.2,248.3 783.6,255.3 786.6,261.5" fill="none" stroke="#f3c35c" stroke-width="2.8" stroke-linejoin="round" stroke-linecap="round"/><polyline points="754.3,314.3 757.5,319.9 759.5,322.9 762.5,328.7" fill="none" stroke="#f3c35c" stroke-width="2.8" stroke-linejoin="round" stroke-linecap="round"/><polyline points="780.4,250.4 788.1,251.2 793.8,251.8 799.5,255.2" fill="none" stroke="#f3c35c" stroke-width="2.8" stroke-linejoin="round" stroke-linecap="round"/><polyline points="729.8,247.4 734.6,247.5 738.5,247.8 740.6,247.0" fill="none" stroke="#f3c35c" stroke-width="2.8" stroke-linejoin="round" stroke-linecap="round"/><polyline points="753.0,248.8 757.0,246.4 758.6,247.0 761.8,245.5" fill="none" stroke="#f3c35c" stroke-width="2.8" stroke-linejoin="round" stroke-linecap="round"/><polyline points="784.7,229.4 784.2,235.9 783.7,239.8 781.0,244.1" fill="none" stroke="#f3c35c" stroke-width="2.8" stroke-linejoin="round" stroke-linecap="round"/><polyline points="771.6,222.8 776.2,225.9 781.3,224.4 787.2,227.3" fill="none" stroke="#f3c35c" stroke-width="2.8" stroke-linejoin="round" stroke-linecap="round"/><polyline points="744.5,265.8 745.3,270.4 745.3,274.0 749.0,275.9" fill="none" stroke="#f3c35c" stroke-width="2.8" stroke-linejoin="round" stroke-linecap="round"/><polyline points="723.8,318.0 727.3,312.7 728.4,309.4 734.0,304.4" fill="none" stroke="#f3c35c" stroke-width="2.8" stroke-linejoin="round" stroke-linecap="round"/><polyline points="738.3,286.1 744.0,289.5 751.7,290.3 759.0,294.4" fill="none" stroke="#f3c35c" stroke-width="2.8" stroke-linejoin="round" stroke-linecap="round"/><polyline points="756.6,241.3 756.0,247.0 754.8,252.4 752.7,256.6" fill="none" stroke="#f3c35c" stroke-width="2.8" stroke-linejoin="round" stroke-linecap="round"/><polyline points="775.9,269.1 776.3,274.2 776.2,280.1 775.1,285.0" fill="none" stroke="#f3c35c" stroke-width="2.8" stroke-linejoin="round" stroke-linecap="round"/><polyline points="764.8,267.3 772.2,272.8 776.3,275.3 785.2,280.7" fill="none" stroke="#f3c35c" stroke-width="2.8" stroke-linejoin="round" stroke-linecap="round"/><polyline points="778.9,292.0 784.6,291.0 789.1,287.9 796.2,283.7" fill="none" stroke="#f3c35c" stroke-width="2.8" stroke-linejoin="round" stroke-linecap="round"/><polyline points="719.7,327.0 723.1,326.9 728.6,324.5 731.0,319.9" fill="none" stroke="#f3c35c" stroke-width="2.8" stroke-linejoin="round" stroke-linecap="round"/><polyline points="746.1,284.1 752.2,278.6 757.1,274.2 760.9,270.3" fill="none" stroke="#f3c35c" stroke-width="2.8" stroke-linejoin="round" stroke-linecap="round"/><polyline points="759.3,294.5 765.6,292.8 771.0,288.8 777.4,288.0" fill="none" stroke="#f3c35c" stroke-width="2.8" stroke-linejoin="round" stroke-linecap="round"/><polyline points="778.2,226.4 780.2,232.0 782.3,238.1 786.3,244.1" fill="none" stroke="#f3c35c" stroke-width="2.8" stroke-linejoin="round" stroke-linecap="round"/><polyline points="766.0,296.6 766.6,301.1 765.1,309.2 766.2,316.8" fill="none" stroke="#f3c35c" stroke-width="2.8" stroke-linejoin="round" stroke-linecap="round"/><polyline points="744.9,264.6 751.6,263.6 760.9,262.5 767.0,261.6" fill="none" stroke="#f3c35c" stroke-width="2.8" stroke-linejoin="round" stroke-linecap="round"/><polyline points="791.6,244.6 798.7,247.1 807.4,251.7 813.6,255.0" fill="none" stroke="#f3c35c" stroke-width="2.8" stroke-linejoin="round" stroke-linecap="round"/><polyline points="792.1,239.2 797.8,239.7 801.7,241.4 808.4,243.2" fill="none" stroke="#f3c35c" stroke-width="2.8" stroke-linejoin="round" stroke-linecap="round"/><polyline points="768.1,285.7 769.9,291.4 772.3,293.1 775.3,296.1" fill="none" stroke="#f3c35c" stroke-width="2.8" stroke-linejoin="round" stroke-linecap="round"/><polyline points="793.7,272.2 794.7,278.0 795.7,284.8 797.1,290.1" fill="none" stroke="#f3c35c" stroke-width="2.8" stroke-linejoin="round" stroke-linecap="round"/><polyline points="740.8,260.6 746.0,263.8 750.2,265.3 752.7,267.2" fill="none" stroke="#f3c35c" stroke-width="2.8" stroke-linejoin="round" stroke-linecap="round"/><polyline points="771.0,267.6 774.1,272.7 774.8,279.3 777.8,286.4" fill="none" stroke="#f3c35c" stroke-width="2.8" stroke-linejoin="round" stroke-linecap="round"/><polyline points="775.5,210.1 776.3,217.2 778.4,226.0 779.4,233.6" fill="none" stroke="#f3c35c" stroke-width="2.8" stroke-linejoin="round" stroke-linecap="round"/><polyline points="741.7,255.7 744.9,258.5 750.3,258.5 753.7,258.5" fill="none" stroke="#f3c35c" stroke-width="2.8" stroke-linejoin="round" stroke-linecap="round"/><polyline points="741.5,248.2 745.1,246.2 748.7,244.9 754.3,243.0" fill="none" stroke="#f3c35c" stroke-width="2.8" stroke-linejoin="round" stroke-linecap="round"/><polyline points="739.1,292.3 740.8,293.3 743.8,292.7 746.8,292.2" fill="none" stroke="#f3c35c" stroke-width="2.8" stroke-linejoin="round" stroke-linecap="round"/><polyline points="731.5,303.4 733.8,308.3 732.4,312.5 734.0,317.8" fill="none" stroke="#f3c35c" stroke-width="2.8" stroke-linejoin="round" stroke-linecap="round"/><polyline points="751.4,234.6 751.3,242.4 751.4,250.4 750.3,257.9" fill="none" stroke="#f3c35c" stroke-width="2.8" stroke-linejoin="round" stroke-linecap="round"/><polyline points="716.0,309.3 721.7,312.3 727.3,315.6 731.0,319.1" fill="none" stroke="#f3c35c" stroke-width="2.8" stroke-linejoin="round" stroke-linecap="round"/><polyline points="753.1,227.7 760.1,230.0 764.7,232.3 768.6,233.0" fill="none" stroke="#f3c35c" stroke-width="2.8" stroke-linejoin="round" stroke-linecap="round"/><polyline points="775.5,244.8 776.0,251.3 775.7,256.3 778.0,260.7" fill="none" stroke="#f3c35c" stroke-width="2.8" stroke-linejoin="round" stroke-linecap="round"/><polyline points="728.0,312.0 735.7,314.6 745.4,313.8 751.8,317.2" fill="none" stroke="#f3c35c" stroke-width="2.8" stroke-linejoin="round" stroke-linecap="round"/><polyline points="742.5,296.3 744.5,296.5 750.7,294.9 753.7,294.2" fill="none" stroke="#f3c35c" stroke-width="2.8" stroke-linejoin="round" stroke-linecap="round"/><polyline points="767.4,302.4 770.1,300.2 775.0,296.8 777.4,293.9" fill="none" stroke="#f3c35c" stroke-width="2.8" stroke-linejoin="round" stroke-linecap="round"/><polyline points="734.8,301.0 734.3,308.0 736.8,316.4 735.4,323.2" fill="none" stroke="#f3c35c" stroke-width="2.8" stroke-linejoin="round" stroke-linecap="round"/><polyline points="782.7,264.9 784.0,269.2 786.3,273.7 785.6,279.4" fill="none" stroke="#f3c35c" stroke-width="2.8" stroke-linejoin="round" stroke-linecap="round"/><polyline points="751.1,270.6 757.9,272.9 766.5,274.8 772.1,277.1" fill="none" stroke="#f3c35c" stroke-width="2.8" stroke-linejoin="round" stroke-linecap="round"/><polyline points="757.3,254.3 756.3,260.0 754.9,266.6 754.0,271.7" fill="none" stroke="#f3c35c" stroke-width="2.8" stroke-linejoin="round" stroke-linecap="round"/><polyline points="789.4,264.8 791.1,269.6 789.1,274.9 789.8,283.4" fill="none" stroke="#f3c35c" stroke-width="2.8" stroke-linejoin="round" stroke-linecap="round"/><polyline points="783.0,239.0 787.8,238.1 795.4,236.2 801.5,233.9" fill="none" stroke="#f3c35c" stroke-width="2.8" stroke-linejoin="round" stroke-linecap="round"/><polyline points="781.8,253.3 781.2,260.1 779.3,265.4 778.3,271.6" fill="none" stroke="#f3c35c" stroke-width="2.8" stroke-linejoin="round" stroke-linecap="round"/><polyline points="754.2,232.4 758.4,231.2 762.8,232.1 769.2,231.3" fill="none" stroke="#f3c35c" stroke-width="2.8" stroke-linejoin="round" stroke-linecap="round"/><polyline points="792.9,241.0 797.7,247.9 799.8,251.2 805.7,258.2" fill="none" stroke="#f3c35c" stroke-width="2.8" stroke-linejoin="round" stroke-linecap="round"/><polyline points="764.8,295.6 769.6,300.3 770.7,308.0 773.0,312.3" fill="none" stroke="#f3c35c" stroke-width="2.8" stroke-linejoin="round" stroke-linecap="round"/><polyline points="838.6,277.1 841.5,283.9 843.0,289.6 847.7,298.6" fill="none" stroke="#f3c35c" stroke-width="2.8" stroke-linejoin="round" stroke-linecap="round"/><polyline points="844.7,254.5 850.3,250.0 854.1,245.9 858.5,239.7" fill="none" stroke="#f3c35c" stroke-width="2.8" stroke-linejoin="round" stroke-linecap="round"/><polyline points="876.8,263.8 876.3,266.5 879.0,271.7 877.8,276.1" fill="none" stroke="#f3c35c" stroke-width="2.8" stroke-linejoin="round" stroke-linecap="round"/><polyline points="897.3,271.7 905.4,274.7 913.0,275.3 920.4,279.5" fill="none" stroke="#f3c35c" stroke-width="2.8" stroke-linejoin="round" stroke-linecap="round"/><polyline points="828.4,288.2 833.4,283.0 839.0,278.4 843.7,273.4" fill="none" stroke="#f3c35c" stroke-width="2.8" stroke-linejoin="round" stroke-linecap="round"/><polyline points="854.4,292.4 860.2,293.3 863.8,293.3 871.5,293.6" fill="none" stroke="#f3c35c" stroke-width="2.8" stroke-linejoin="round" stroke-linecap="round"/><polyline points="882.7,276.5 889.9,279.5 898.1,278.7 907.8,279.8" fill="none" stroke="#f3c35c" stroke-width="2.8" stroke-linejoin="round" stroke-linecap="round"/><polyline points="902.0,255.3 905.4,263.6 908.3,272.0 907.1,279.2" fill="none" stroke="#f3c35c" stroke-width="2.8" stroke-linejoin="round" stroke-linecap="round"/><polyline points="837.2,242.2 843.9,247.8 850.8,250.9 856.0,255.4" fill="none" stroke="#f3c35c" stroke-width="2.8" stroke-linejoin="round" stroke-linecap="round"/><polyline points="851.5,272.8 859.0,273.7 865.0,275.2 870.0,277.7" fill="none" stroke="#f3c35c" stroke-width="2.8" stroke-linejoin="round" stroke-linecap="round"/><polyline points="838.5,264.3 840.6,267.6 844.5,274.5 847.6,281.2" fill="none" stroke="#f3c35c" stroke-width="2.8" stroke-linejoin="round" stroke-linecap="round"/><polyline points="829.9,275.5 835.2,271.3 840.5,269.6 845.9,266.1" fill="none" stroke="#f3c35c" stroke-width="2.8" stroke-linejoin="round" stroke-linecap="round"/><polyline points="833.7,276.9 837.5,285.1 845.2,291.4 849.9,297.9" fill="none" stroke="#f3c35c" stroke-width="2.8" stroke-linejoin="round" stroke-linecap="round"/><polyline points="845.6,240.7 847.7,244.2 854.3,248.1 857.5,251.6" fill="none" stroke="#f3c35c" stroke-width="2.8" stroke-linejoin="round" stroke-linecap="round"/><polyline points="845.3,181.6 847.3,178.7 854.6,174.9 858.4,171.7" fill="none" stroke="#f3c35c" stroke-width="2.8" stroke-linejoin="round" stroke-linecap="round"/><polyline points="811.4,177.9 815.2,176.9 817.5,178.9 822.4,177.2" fill="none" stroke="#f3c35c" stroke-width="2.8" stroke-linejoin="round" stroke-linecap="round"/><polyline points="811.8,175.2 815.6,176.2 819.6,175.7 824.7,176.4" fill="none" stroke="#f3c35c" stroke-width="2.8" stroke-linejoin="round" stroke-linecap="round"/><polyline points="802.3,181.1 809.1,181.3 815.1,183.4 820.5,181.3" fill="none" stroke="#f3c35c" stroke-width="2.8" stroke-linejoin="round" stroke-linecap="round"/><polyline points="829.2,138.3 832.8,135.9 836.4,133.6 841.5,131.0" fill="none" stroke="#f3c35c" stroke-width="2.8" stroke-linejoin="round" stroke-linecap="round"/><polyline points="822.6,177.0 823.3,180.7 822.7,184.7 822.4,192.1" fill="none" stroke="#f3c35c" stroke-width="2.8" stroke-linejoin="round" stroke-linecap="round"/><polyline points="855.4,118.0 856.2,123.8 859.9,130.4 861.0,137.2" fill="none" stroke="#f3c35c" stroke-width="2.8" stroke-linejoin="round" stroke-linecap="round"/><polyline points="803.3,197.1 806.5,199.6 811.4,199.9 813.7,202.2" fill="none" stroke="#f3c35c" stroke-width="2.8" stroke-linejoin="round" stroke-linecap="round"/><polyline points="835.4,176.2 840.8,179.3 844.0,183.7 850.4,189.1" fill="none" stroke="#f3c35c" stroke-width="2.8" stroke-linejoin="round" stroke-linecap="round"/><polyline points="808.6,172.3 814.9,171.8 820.4,169.7 830.0,166.9" fill="none" stroke="#f3c35c" stroke-width="2.8" stroke-linejoin="round" stroke-linecap="round"/><polyline points="802.9,185.7 805.8,189.9 810.4,192.9 815.3,198.4" fill="none" stroke="#f3c35c" stroke-width="2.8" stroke-linejoin="round" stroke-linecap="round"/><polyline points="817.9,167.8 818.4,169.3 821.0,174.1 822.9,176.8" fill="none" stroke="#f3c35c" stroke-width="2.8" stroke-linejoin="round" stroke-linecap="round"/><polyline points="849.2,136.7 853.5,134.0 859.7,130.6 865.4,126.5" fill="none" stroke="#f3c35c" stroke-width="2.8" stroke-linejoin="round" stroke-linecap="round"/><polyline points="843.2,133.5 843.1,138.5 841.7,144.1 842.9,150.4" fill="none" stroke="#f3c35c" stroke-width="2.8" stroke-linejoin="round" stroke-linecap="round"/><polyline points="826.5,135.3 829.2,130.9 835.2,129.0 838.6,124.6" fill="none" stroke="#f3c35c" stroke-width="2.8" stroke-linejoin="round" stroke-linecap="round"/><polyline points="829.6,113.5 830.8,117.6 831.2,124.2 830.7,131.6" fill="none" stroke="#f3c35c" stroke-width="2.8" stroke-linejoin="round" stroke-linecap="round"/><polyline points="812.1,119.5 811.8,123.2 811.8,126.5 813.2,129.4" fill="none" stroke="#f3c35c" stroke-width="2.8" stroke-linejoin="round" stroke-linecap="round"/><polyline points="828.7,207.7 833.1,209.4 836.1,211.3 838.0,210.3" fill="none" stroke="#f3c35c" stroke-width="2.8" stroke-linejoin="round" stroke-linecap="round"/><polyline points="816.6,119.4 822.4,120.4 829.3,116.5 836.1,116.0" fill="none" stroke="#f3c35c" stroke-width="2.8" stroke-linejoin="round" stroke-linecap="round"/><polyline points="835.1,192.1 835.7,199.3 835.4,204.1 834.1,207.1" fill="none" stroke="#f3c35c" stroke-width="2.8" stroke-linejoin="round" stroke-linecap="round"/><polyline points="809.3,148.6 813.5,146.5 817.0,142.8 819.3,140.0" fill="none" stroke="#f3c35c" stroke-width="2.8" stroke-linejoin="round" stroke-linecap="round"/><polyline points="825.8,163.2 833.0,165.9 837.3,165.3 841.0,165.2" fill="none" stroke="#f3c35c" stroke-width="2.8" stroke-linejoin="round" stroke-linecap="round"/><polyline points="878.7,180.4 881.7,183.6 883.8,186.8 882.8,189.1" fill="none" stroke="#f3c35c" stroke-width="2.8" stroke-linejoin="round" stroke-linecap="round"/><polyline points="929.1,177.1 929.1,180.2 928.4,186.3 929.3,190.6" fill="none" stroke="#f3c35c" stroke-width="2.8" stroke-linejoin="round" stroke-linecap="round"/><polyline points="922.8,176.7 925.1,175.1 927.9,173.2 929.3,169.6" fill="none" stroke="#f3c35c" stroke-width="2.8" stroke-linejoin="round" stroke-linecap="round"/><polyline points="853.7,186.0 860.9,187.1 864.2,190.1 871.3,191.1" fill="none" stroke="#f3c35c" stroke-width="2.8" stroke-linejoin="round" stroke-linecap="round"/><polyline points="902.8,180.8 906.0,179.2 910.5,180.2 916.7,177.0" fill="none" stroke="#f3c35c" stroke-width="2.8" stroke-linejoin="round" stroke-linecap="round"/><polyline points="897.0,179.6 903.8,181.3 907.5,183.8 915.6,183.3" fill="none" stroke="#f3c35c" stroke-width="2.8" stroke-linejoin="round" stroke-linecap="round"/><polyline points="934.2,165.3 935.5,172.0 932.9,175.1 935.3,177.7" fill="none" stroke="#f3c35c" stroke-width="2.8" stroke-linejoin="round" stroke-linecap="round"/><polyline points="952.2,173.6 957.6,171.8 960.6,171.7 962.2,170.0" fill="none" stroke="#f3c35c" stroke-width="2.8" stroke-linejoin="round" stroke-linecap="round"/><polyline points="869.7,173.4 873.4,177.3 874.7,183.5 880.1,187.6" fill="none" stroke="#f3c35c" stroke-width="2.8" stroke-linejoin="round" stroke-linecap="round"/><polyline points="945.1,167.1 944.9,170.7 947.1,176.7 946.7,178.9" fill="none" stroke="#f3c35c" stroke-width="2.8" stroke-linejoin="round" stroke-linecap="round"/><polyline points="912.1,180.5 917.0,181.1 920.5,184.7 924.3,185.2" fill="none" stroke="#f3c35c" stroke-width="2.8" stroke-linejoin="round" stroke-linecap="round"/><polyline points="920.8,184.1 923.8,182.0 924.4,179.9 929.0,179.0" fill="none" stroke="#f3c35c" stroke-width="2.8" stroke-linejoin="round" stroke-linecap="round"/><polyline points="620.5,402.3 625.0,407.3 627.9,411.1 630.4,416.7" fill="none" stroke="#f3c35c" stroke-width="2.8" stroke-linejoin="round" stroke-linecap="round"/><polyline points="594.8,442.0 592.8,446.7 595.6,452.6 593.3,458.8" fill="none" stroke="#f3c35c" stroke-width="2.8" stroke-linejoin="round" stroke-linecap="round"/><polyline points="586.7,413.4 587.3,416.2 588.5,423.0 586.9,429.5" fill="none" stroke="#f3c35c" stroke-width="2.8" stroke-linejoin="round" stroke-linecap="round"/><polyline points="572.9,407.0 575.3,400.3 580.7,398.0 582.4,392.7" fill="none" stroke="#f3c35c" stroke-width="2.8" stroke-linejoin="round" stroke-linecap="round"/><polyline points="587.2,440.1 591.3,442.6 595.7,442.8 601.2,446.3" fill="none" stroke="#f3c35c" stroke-width="2.8" stroke-linejoin="round" stroke-linecap="round"/><polyline points="628.4,408.2 634.6,406.6 638.8,408.0 642.7,407.9" fill="none" stroke="#f3c35c" stroke-width="2.8" stroke-linejoin="round" stroke-linecap="round"/><polyline points="627.6,422.2 633.6,418.6 639.4,416.9 645.1,415.0" fill="none" stroke="#f3c35c" stroke-width="2.8" stroke-linejoin="round" stroke-linecap="round"/><polyline points="585.5,431.9 588.3,437.4 590.7,444.5 592.8,450.5" fill="none" stroke="#f3c35c" stroke-width="2.8" stroke-linejoin="round" stroke-linecap="round"/><polyline points="623.5,402.1 629.4,399.7 632.9,400.2 639.5,398.7" fill="none" stroke="#f3c35c" stroke-width="2.8" stroke-linejoin="round" stroke-linecap="round"/><polyline points="609.3,415.7 609.6,418.1 612.1,422.3 613.4,426.8" fill="none" stroke="#f3c35c" stroke-width="2.8" stroke-linejoin="round" stroke-linecap="round"/><polyline points="643.8,404.4 644.0,409.2 644.3,415.3 645.9,419.8" fill="none" stroke="#f3c35c" stroke-width="2.8" stroke-linejoin="round" stroke-linecap="round"/><polyline points="638.7,405.1 644.6,405.3 650.2,410.2 655.3,412.7" fill="none" stroke="#f3c35c" stroke-width="2.8" stroke-linejoin="round" stroke-linecap="round"/><polyline points="573.4,420.0 578.7,419.2 580.6,418.4 585.0,415.6" fill="none" stroke="#f3c35c" stroke-width="2.8" stroke-linejoin="round" stroke-linecap="round"/><polyline points="584.9,415.2 589.3,416.7 596.2,418.0 599.1,421.3" fill="none" stroke="#f3c35c" stroke-width="2.8" stroke-linejoin="round" stroke-linecap="round"/><polyline points="585.7,420.8 591.3,426.1 599.7,431.0 604.5,435.0" fill="none" stroke="#f3c35c" stroke-width="2.8" stroke-linejoin="round" stroke-linecap="round"/><polyline points="592.7,412.1 600.4,412.4 606.0,415.7 612.7,416.4" fill="none" stroke="#f3c35c" stroke-width="2.8" stroke-linejoin="round" stroke-linecap="round"/><polyline points="618.6,396.5 622.2,399.1 625.4,401.3 629.2,402.2" fill="none" stroke="#f3c35c" stroke-width="2.8" stroke-linejoin="round" stroke-linecap="round"/><polyline points="583.7,435.1 590.8,434.7 595.4,431.3 600.0,429.1" fill="none" stroke="#f3c35c" stroke-width="2.8" stroke-linejoin="round" stroke-linecap="round"/><polyline points="706.1,329.0 710.8,325.1 714.7,322.3 719.6,319.6" fill="none" stroke="#f3c35c" stroke-width="2.8" stroke-linejoin="round" stroke-linecap="round"/><polyline points="693.3,317.3 699.4,316.4 705.3,318.6 712.0,317.0" fill="none" stroke="#f3c35c" stroke-width="2.8" stroke-linejoin="round" stroke-linecap="round"/><polyline points="689.1,295.7 693.6,302.1 697.5,304.9 702.9,309.7" fill="none" stroke="#f3c35c" stroke-width="2.8" stroke-linejoin="round" stroke-linecap="round"/><polyline points="707.4,308.2 710.9,313.2 711.9,317.3 716.2,323.1" fill="none" stroke="#f3c35c" stroke-width="2.8" stroke-linejoin="round" stroke-linecap="round"/><polyline points="725.0,300.6 730.7,304.4 736.0,306.8 738.9,312.6" fill="none" stroke="#f3c35c" stroke-width="2.8" stroke-linejoin="round" stroke-linecap="round"/><polyline points="731.4,315.2 729.7,320.0 729.0,325.7 727.6,332.8" fill="none" stroke="#f3c35c" stroke-width="2.8" stroke-linejoin="round" stroke-linecap="round"/><polyline points="704.8,313.7 711.9,311.3 715.9,310.1 721.3,308.7" fill="none" stroke="#f3c35c" stroke-width="2.8" stroke-linejoin="round" stroke-linecap="round"/><polyline points="691.5,310.1 697.7,310.3 703.8,308.7 709.3,307.9" fill="none" stroke="#f3c35c" stroke-width="2.8" stroke-linejoin="round" stroke-linecap="round"/><polyline points="699.2,310.2 698.5,316.6 700.8,320.2 699.5,323.2" fill="none" stroke="#f3c35c" stroke-width="2.8" stroke-linejoin="round" stroke-linecap="round"/><polyline points="721.7,339.3 728.4,338.1 733.3,334.2 738.0,334.1" fill="none" stroke="#f3c35c" stroke-width="2.8" stroke-linejoin="round" stroke-linecap="round"/><polyline points="699.6,305.6 705.2,301.4 709.7,300.4 712.8,295.1" fill="none" stroke="#f3c35c" stroke-width="2.8" stroke-linejoin="round" stroke-linecap="round"/><polyline points="718.1,291.7 721.0,293.3 725.1,299.6 730.6,303.5" fill="none" stroke="#f3c35c" stroke-width="2.8" stroke-linejoin="round" stroke-linecap="round"/><polyline points="706.3,238.9 710.0,238.8 716.4,235.5 718.5,235.0" fill="none" stroke="#f3c35c" stroke-width="2.8" stroke-linejoin="round" stroke-linecap="round"/><polyline points="712.1,252.3 715.9,251.3 720.0,249.6 724.9,246.5" fill="none" stroke="#f3c35c" stroke-width="2.8" stroke-linejoin="round" stroke-linecap="round"/><polyline points="707.4,226.9 713.7,227.2 719.4,229.7 722.4,230.1" fill="none" stroke="#f3c35c" stroke-width="2.8" stroke-linejoin="round" stroke-linecap="round"/><polyline points="723.6,236.0 726.6,231.7 729.3,225.8 732.7,222.1" fill="none" stroke="#f3c35c" stroke-width="2.8" stroke-linejoin="round" stroke-linecap="round"/><polyline points="724.0,249.3 730.5,253.3 735.1,258.1 741.0,261.6" fill="none" stroke="#f3c35c" stroke-width="2.8" stroke-linejoin="round" stroke-linecap="round"/><polyline points="700.0,260.3 703.0,259.6 706.8,260.1 713.3,257.7" fill="none" stroke="#f3c35c" stroke-width="2.8" stroke-linejoin="round" stroke-linecap="round"/><polyline points="720.6,223.7 727.4,226.6 734.4,230.0 740.7,230.5" fill="none" stroke="#f3c35c" stroke-width="2.8" stroke-linejoin="round" stroke-linecap="round"/><polyline points="720.1,233.4 720.3,231.6 724.2,229.6 728.1,227.9" fill="none" stroke="#f3c35c" stroke-width="2.8" stroke-linejoin="round" stroke-linecap="round"/><polyline points="731.3,240.4 736.9,237.6 741.8,235.8 745.0,231.8" fill="none" stroke="#f3c35c" stroke-width="2.8" stroke-linejoin="round" stroke-linecap="round"/><polyline points="726.3,225.6 725.8,230.1 726.6,234.2 726.1,239.7" fill="none" stroke="#f3c35c" stroke-width="2.8" stroke-linejoin="round" stroke-linecap="round"/><polyline points="575.0,230.0 589.6,232.3 613.0,234.0 630.0,234.0 659.0,242.4 688.5,239.6 706.7,247.0 745.0,245.0 770.0,250.0" fill="none" stroke="#fde49c" stroke-width="1.4" stroke-linejoin="round" stroke-linecap="round"/><polyline points="589.6,232.3 598.8,255.0 615.0,257.0 626.0,247.0 642.7,253.4 657.3,247.0 661.0,242.0" fill="none" stroke="#fde49c" stroke-width="1.4" stroke-linejoin="round" stroke-linecap="round"/><polyline points="589.6,232.3 582.3,261.6 575.0,272.6" fill="none" stroke="#fde49c" stroke-width="1.4" stroke-linejoin="round" stroke-linecap="round"/><polyline points="589.6,232.3 580.0,224.0 575.0,220.0" fill="none" stroke="#fde49c" stroke-width="1.4" stroke-linejoin="round" stroke-linecap="round"/><polyline points="575.0,292.7 593.0,295.4 620.7,301.9 648.0,299.0 672.0,300.0 690.0,300.0 714.0,296.4 732.4,285.4 750.0,282.0 770.0,276.0" fill="none" stroke="#fde49c" stroke-width="1.4" stroke-linejoin="round" stroke-linecap="round"/><polyline points="661.0,242.0 660.0,265.0 670.0,289.0 673.8,305.5 677.5,314.7 694.0,323.8 720.0,332.0 745.0,345.0" fill="none" stroke="#fde49c" stroke-width="1.4" stroke-linejoin="round" stroke-linecap="round"/><polyline points="672.0,298.0 692.0,274.4 703.0,265.0 710.4,248.8 714.0,234.0 716.0,225.0 720.0,200.0 735.0,180.0" fill="none" stroke="#fde49c" stroke-width="1.4" stroke-linejoin="round" stroke-linecap="round"/><polyline points="644.5,301.9 677.5,312.8 703.0,316.5 720.0,322.0" fill="none" stroke="#fde49c" stroke-width="1.4" stroke-linejoin="round" stroke-linecap="round"/><polyline points="633.6,345.0 635.4,334.8 651.9,323.8 672.0,315.6 675.6,327.5 670.0,345.0 668.0,360.0 655.5,380.7" fill="none" stroke="#fde49c" stroke-width="1.4" stroke-linejoin="round" stroke-linecap="round"/><polyline points="706.7,261.6 725.0,283.6 745.0,285.4 765.0,290.0" fill="none" stroke="#fde49c" stroke-width="1.4" stroke-linejoin="round" stroke-linecap="round"/><polyline points="721.4,247.0 739.7,265.3 755.0,280.0" fill="none" stroke="#fde49c" stroke-width="1.4" stroke-linejoin="round" stroke-linecap="round"/><polyline points="575.0,221.0 588.0,211.0 608.0,193.0 624.0,179.0 634.0,166.0" fill="none" stroke="#fde49c" stroke-width="1.4" stroke-linejoin="round" stroke-linecap="round"/><polyline points="643.7,165.0 645.4,176.4 658.8,189.8 650.5,209.9 653.8,226.0 655.0,236.0" fill="none" stroke="#fde49c" stroke-width="1.4" stroke-linejoin="round" stroke-linecap="round"/><polyline points="658.8,189.8 672.2,206.5 679.0,226.0 680.0,236.0" fill="none" stroke="#fde49c" stroke-width="1.4" stroke-linejoin="round" stroke-linecap="round"/><polyline points="591.8,119.4 608.5,124.4" fill="none" stroke="#fde49c" stroke-width="1.4" stroke-linejoin="round" stroke-linecap="round"/><polyline points="575.0,132.8 585.0,131.0" fill="none" stroke="#fde49c" stroke-width="1.4" stroke-linejoin="round" stroke-linecap="round"/><polyline points="668.9,124.4 675.6,116.0" fill="none" stroke="#fde49c" stroke-width="1.4" stroke-linejoin="round" stroke-linecap="round"/><polyline points="689.0,124.4 715.0,119.4 740.0,116.0" fill="none" stroke="#fde49c" stroke-width="1.4" stroke-linejoin="round" stroke-linecap="round"/><polyline points="704.1,206.5 715.0,216.6" fill="none" stroke="#fde49c" stroke-width="1.4" stroke-linejoin="round" stroke-linecap="round"/><polyline points="704.6,205.2 720.5,217.4 727.8,219.9 731.5,213.8 740.0,210.0" fill="none" stroke="#fde49c" stroke-width="1.4" stroke-linejoin="round" stroke-linecap="round"/><polyline points="731.5,213.8 730.2,238.2" fill="none" stroke="#fde49c" stroke-width="1.4" stroke-linejoin="round" stroke-linecap="round"/><polyline points="755.9,222.0 770.5,233.3 790.0,240.6" fill="none" stroke="#fde49c" stroke-width="1.4" stroke-linejoin="round" stroke-linecap="round"/><polyline points="771.7,222.0 772.9,245.0" fill="none" stroke="#fde49c" stroke-width="1.4" stroke-linejoin="round" stroke-linecap="round"/><polyline points="644.5,422.8 688.5,388.0 703.0,362.4 710.4,342.3 716.0,335.0 725.0,316.0 740.0,300.0" fill="none" stroke="#fde49c" stroke-width="1.4" stroke-linejoin="round" stroke-linecap="round"/><polyline points="655.5,380.7 684.8,355.0 706.7,336.8 720.0,330.0" fill="none" stroke="#fde49c" stroke-width="1.4" stroke-linejoin="round" stroke-linecap="round"/><polyline points="659.0,404.5 684.8,405.4 739.7,411.9 760.0,413.0" fill="none" stroke="#fde49c" stroke-width="1.4" stroke-linejoin="round" stroke-linecap="round"/><polyline points="684.8,384.4 745.0,395.4 770.0,400.0" fill="none" stroke="#fde49c" stroke-width="1.4" stroke-linejoin="round" stroke-linecap="round"/><polyline points="580.5,335.0 584.0,379.0 582.3,430.0 580.0,454.0" fill="none" stroke="#fde49c" stroke-width="1.4" stroke-linejoin="round" stroke-linecap="round"/><polyline points="633.6,335.0 633.6,349.6 604.3,371.6 586.0,379.0 575.0,380.7" fill="none" stroke="#fde49c" stroke-width="1.4" stroke-linejoin="round" stroke-linecap="round"/><polyline points="677.5,335.0 670.0,344.0 679.3,355.0" fill="none" stroke="#fde49c" stroke-width="1.4" stroke-linejoin="round" stroke-linecap="round"/><polyline points="732.4,335.0 730.5,362.4 739.7,399.0 745.0,430.0" fill="none" stroke="#fde49c" stroke-width="1.4" stroke-linejoin="round" stroke-linecap="round"/><polyline points="714.0,340.5 734.0,371.6 750.0,377.0 770.0,390.0" fill="none" stroke="#fde49c" stroke-width="1.4" stroke-linejoin="round" stroke-linecap="round"/><polyline points="575.0,411.9 611.6,413.7 630.0,419.2 651.9,426.5 670.0,440.0" fill="none" stroke="#fde49c" stroke-width="1.4" stroke-linejoin="round" stroke-linecap="round"/><polyline points="659.0,411.9 657.3,454.0" fill="none" stroke="#fde49c" stroke-width="1.4" stroke-linejoin="round" stroke-linecap="round"/><polyline points="630.0,390.0 608.0,430.0 597.0,454.0" fill="none" stroke="#fde49c" stroke-width="1.4" stroke-linejoin="round" stroke-linecap="round"/><polyline points="575.0,440.0 600.0,430.0 630.0,420.0 660.0,400.0" fill="none" stroke="#fde49c" stroke-width="1.4" stroke-linejoin="round" stroke-linecap="round"/><polyline points="600.0,454.0 640.0,435.0 655.0,420.0" fill="none" stroke="#fde49c" stroke-width="1.4" stroke-linejoin="round" stroke-linecap="round"/><polyline points="642.0,395.0 651.0,385.0 661.0,390.0 662.0,402.0 651.0,408.0 642.0,402.0 642.0,395.0" fill="none" stroke="#fde49c" stroke-width="1.4" stroke-linejoin="round" stroke-linecap="round"/><polyline points="760.0,360.0 770.0,380.0 768.0,400.0 760.0,412.0 750.0,440.0 748.0,454.0" fill="none" stroke="#fde49c" stroke-width="1.4" stroke-linejoin="round" stroke-linecap="round"/><polyline points="745.0,390.0 765.0,385.0 775.0,395.0" fill="none" stroke="#fde49c" stroke-width="1.4" stroke-linejoin="round" stroke-linecap="round"/><polyline points="745.0,410.0 770.0,410.0" fill="none" stroke="#fde49c" stroke-width="1.4" stroke-linejoin="round" stroke-linecap="round"/><polyline points="620.0,330.0 625.0,345.0 610.0,365.0" fill="none" stroke="#fde49c" stroke-width="1.4" stroke-linejoin="round" stroke-linecap="round"/><polyline points="590.0,454.0 615.0,440.0 640.0,440.0" fill="none" stroke="#fde49c" stroke-width="1.4" stroke-linejoin="round" stroke-linecap="round"/><polyline points="846.6,212.0 867.1,205.1 886.0,196.6 910.0,184.6 930.6,176.0 947.7,165.7 963.2,157.1 1012.0,150.0" fill="none" stroke="#fde49c" stroke-width="1.4" stroke-linejoin="round" stroke-linecap="round"/><polyline points="848.3,193.1 886.0,181.1 910.0,170.9 934.0,164.0 961.4,153.7" fill="none" stroke="#fde49c" stroke-width="1.4" stroke-linejoin="round" stroke-linecap="round"/><polyline points="875.7,126.3 877.4,145.1 884.3,158.9 886.0,176.0 886.0,189.7 884.0,198.0" fill="none" stroke="#fde49c" stroke-width="1.4" stroke-linejoin="round" stroke-linecap="round"/><polyline points="838.0,129.7 855.1,126.3 875.7,126.3 892.9,124.6 918.6,119.4 930.0,116.0" fill="none" stroke="#fde49c" stroke-width="1.4" stroke-linejoin="round" stroke-linecap="round"/><polyline points="855.1,126.3 844.9,138.3 841.4,155.4 844.9,167.4 846.0,190.0" fill="none" stroke="#fde49c" stroke-width="1.4" stroke-linejoin="round" stroke-linecap="round"/><polyline points="817.4,138.3 814.0,160.6 816.0,180.0" fill="none" stroke="#fde49c" stroke-width="1.4" stroke-linejoin="round" stroke-linecap="round"/><polyline points="800.3,148.6 824.3,145.1 838.0,140.0" fill="none" stroke="#fde49c" stroke-width="1.4" stroke-linejoin="round" stroke-linecap="round"/><polyline points="798.6,116.0 800.3,160.6" fill="none" stroke="#fde49c" stroke-width="1.4" stroke-linejoin="round" stroke-linecap="round"/><polyline points="822.6,119.4 817.4,138.3" fill="none" stroke="#fde49c" stroke-width="1.4" stroke-linejoin="round" stroke-linecap="round"/><polyline points="841.4,119.4 848.3,124.6" fill="none" stroke="#fde49c" stroke-width="1.4" stroke-linejoin="round" stroke-linecap="round"/><polyline points="944.3,116.0 946.0,138.3 940.9,150.3 930.6,160.6" fill="none" stroke="#fde49c" stroke-width="1.4" stroke-linejoin="round" stroke-linecap="round"/><polyline points="920.3,150.3 930.6,160.6 928.0,176.0" fill="none" stroke="#fde49c" stroke-width="1.4" stroke-linejoin="round" stroke-linecap="round"/><polyline points="961.4,146.9 944.3,160.6" fill="none" stroke="#fde49c" stroke-width="1.4" stroke-linejoin="round" stroke-linecap="round"/><polyline points="901.4,119.4 916.9,116.0" fill="none" stroke="#fde49c" stroke-width="1.4" stroke-linejoin="round" stroke-linecap="round"/><polyline points="1012.0,140.0 985.0,148.0 965.0,155.0" fill="none" stroke="#fde49c" stroke-width="1.4" stroke-linejoin="round" stroke-linecap="round"/><polyline points="760.0,116.0 770.0,135.0 765.0,160.0 775.0,175.0" fill="none" stroke="#fde49c" stroke-width="1.4" stroke-linejoin="round" stroke-linecap="round"/><polyline points="780.0,232.0 800.0,215.0 820.0,205.0 835.0,190.0" fill="none" stroke="#fde49c" stroke-width="1.4" stroke-linejoin="round" stroke-linecap="round"/><polyline points="760.0,225.0 770.0,210.0 790.0,200.0 805.0,180.0 815.0,160.0" fill="none" stroke="#fde49c" stroke-width="1.4" stroke-linejoin="round" stroke-linecap="round"/><polyline points="810.0,282.9 831.7,272.8 853.4,268.4 875.0,264.0 896.8,258.3 910.0,255.4 960.0,245.0 1012.0,236.0" fill="none" stroke="#fde49c" stroke-width="1.4" stroke-linejoin="round" stroke-linecap="round"/><polyline points="831.7,269.9 867.9,254.0 896.8,243.8 910.0,239.5 960.0,235.0 1012.0,229.0" fill="none" stroke="#fde49c" stroke-width="1.4" stroke-linejoin="round" stroke-linecap="round"/><polyline points="810.0,294.5 838.9,290.1 867.9,287.2 896.8,281.4 910.0,278.5 960.0,265.0 1012.0,250.0" fill="none" stroke="#fde49c" stroke-width="1.4" stroke-linejoin="round" stroke-linecap="round"/><polyline points="810.0,297.4 857.8,297.4 875.0,293.0 910.0,288.7 950.0,278.0 1012.0,258.0" fill="none" stroke="#fde49c" stroke-width="1.4" stroke-linejoin="round" stroke-linecap="round"/><polyline points="856.3,311.8 882.4,308.9 912.0,301.0" fill="none" stroke="#fde49c" stroke-width="1.4" stroke-linejoin="round" stroke-linecap="round"/><polyline points="850.5,269.9 859.2,282.9 860.7,310.4" fill="none" stroke="#fde49c" stroke-width="1.4" stroke-linejoin="round" stroke-linecap="round"/><polyline points="873.7,262.6 876.6,282.9 870.8,310.4" fill="none" stroke="#fde49c" stroke-width="1.4" stroke-linejoin="round" stroke-linecap="round"/><polyline points="863.5,271.3 870.8,294.5" fill="none" stroke="#fde49c" stroke-width="1.4" stroke-linejoin="round" stroke-linecap="round"/><polyline points="902.6,259.7 905.5,288.7" fill="none" stroke="#fde49c" stroke-width="1.4" stroke-linejoin="round" stroke-linecap="round"/><polyline points="812.9,239.5 818.7,261.2 831.7,280.0 831.7,291.6 821.6,298.8" fill="none" stroke="#fde49c" stroke-width="1.4" stroke-linejoin="round" stroke-linecap="round"/><polyline points="810.0,245.3 815.8,239.5 823.0,232.2 828.8,225.0 840.0,212.0" fill="none" stroke="#fde49c" stroke-width="1.4" stroke-linejoin="round" stroke-linecap="round"/><polyline points="935.0,232.0 940.0,260.0 945.0,285.0" fill="none" stroke="#fde49c" stroke-width="1.4" stroke-linejoin="round" stroke-linecap="round"/><polyline points="975.0,228.0 985.0,255.0 990.0,272.0" fill="none" stroke="#fde49c" stroke-width="1.4" stroke-linejoin="round" stroke-linecap="round"/><polyline points="1000.0,226.0 1005.0,262.0" fill="none" stroke="#fde49c" stroke-width="1.4" stroke-linejoin="round" stroke-linecap="round"/><polyline points="920.0,240.0 925.0,262.0 930.0,290.0" fill="none" stroke="#fde49c" stroke-width="1.4" stroke-linejoin="round" stroke-linecap="round"/><polyline points="955.0,236.0 958.0,258.0 962.0,280.0" fill="none" stroke="#fde49c" stroke-width="1.4" stroke-linejoin="round" stroke-linecap="round"/><polyline points="900.0,262.0 940.0,255.0 980.0,246.0 1012.0,240.0" fill="none" stroke="#fde49c" stroke-width="1.4" stroke-linejoin="round" stroke-linecap="round"/><polyline points="930.0,232.0 945.0,228.0 1000.0,225.0" fill="none" stroke="#fde49c" stroke-width="1.4" stroke-linejoin="round" stroke-linecap="round"/><polyline points="925.0,282.0 960.0,270.0 1012.0,252.0" fill="none" stroke="#fde49c" stroke-width="1.4" stroke-linejoin="round" stroke-linecap="round"/><polyline points="721.0,310.6 727.1,310.9 732.2,307.2 737.9,307.8" fill="none" stroke="#fde49c" stroke-width="1.2" stroke-linejoin="round" stroke-linecap="round"/><polyline points="754.3,260.5 756.6,258.5 759.1,255.2 761.9,253.6" fill="none" stroke="#fde49c" stroke-width="1.2" stroke-linejoin="round" stroke-linecap="round"/><polyline points="743.1,313.1 750.4,316.5 759.1,318.8 766.7,321.1" fill="none" stroke="#fde49c" stroke-width="1.2" stroke-linejoin="round" stroke-linecap="round"/><polyline points="739.1,226.2 736.8,234.0 736.2,242.6 732.4,252.6" fill="none" stroke="#fde49c" stroke-width="1.2" stroke-linejoin="round" stroke-linecap="round"/><polyline points="730.2,323.9 734.6,325.5 738.2,325.3 741.6,327.9" fill="none" stroke="#fde49c" stroke-width="1.2" stroke-linejoin="round" stroke-linecap="round"/><polyline points="746.8,283.5 747.5,286.8 747.6,291.2 749.4,295.0" fill="none" stroke="#fde49c" stroke-width="1.2" stroke-linejoin="round" stroke-linecap="round"/><polyline points="787.3,274.0 792.5,274.7 796.6,276.4 802.5,278.1" fill="none" stroke="#fde49c" stroke-width="1.2" stroke-linejoin="round" stroke-linecap="round"/><polyline points="808.0,251.6 809.2,257.7 811.1,262.7 813.4,267.9" fill="none" stroke="#fde49c" stroke-width="1.2" stroke-linejoin="round" stroke-linecap="round"/><polyline points="737.1,224.0 740.8,230.4 742.2,233.0 746.0,235.6" fill="none" stroke="#fde49c" stroke-width="1.2" stroke-linejoin="round" stroke-linecap="round"/><polyline points="754.5,227.4 762.6,223.6 767.2,222.1 774.8,217.8" fill="none" stroke="#fde49c" stroke-width="1.2" stroke-linejoin="round" stroke-linecap="round"/><polyline points="786.7,215.4 789.7,222.1 788.7,231.1 791.3,237.5" fill="none" stroke="#fde49c" stroke-width="1.2" stroke-linejoin="round" stroke-linecap="round"/><polyline points="776.8,214.0 779.8,220.4 783.3,228.2 785.2,233.8" fill="none" stroke="#fde49c" stroke-width="1.2" stroke-linejoin="round" stroke-linecap="round"/><polyline points="721.6,298.6 723.3,303.6 722.9,310.6 725.0,314.8" fill="none" stroke="#fde49c" stroke-width="1.2" stroke-linejoin="round" stroke-linecap="round"/><polyline points="717.0,321.4 719.4,323.3 724.5,327.7 729.2,331.6" fill="none" stroke="#fde49c" stroke-width="1.2" stroke-linejoin="round" stroke-linecap="round"/><polyline points="776.0,263.5 780.8,270.5 785.0,278.3 786.7,284.4" fill="none" stroke="#fde49c" stroke-width="1.2" stroke-linejoin="round" stroke-linecap="round"/><polyline points="746.7,232.2 753.8,239.2 759.6,242.1 766.5,246.7" fill="none" stroke="#fde49c" stroke-width="1.2" stroke-linejoin="round" stroke-linecap="round"/><polyline points="751.4,238.6 751.1,242.8 752.8,244.5 754.6,248.6" fill="none" stroke="#fde49c" stroke-width="1.2" stroke-linejoin="round" stroke-linecap="round"/><polyline points="764.4,260.1 767.7,259.8 770.1,259.6 772.7,259.1" fill="none" stroke="#fde49c" stroke-width="1.2" stroke-linejoin="round" stroke-linecap="round"/><polyline points="799.1,269.3 800.9,272.5 799.8,276.4 802.5,281.6" fill="none" stroke="#fde49c" stroke-width="1.2" stroke-linejoin="round" stroke-linecap="round"/><polyline points="767.3,242.3 770.8,240.4 777.9,236.1 783.2,234.5" fill="none" stroke="#fde49c" stroke-width="1.2" stroke-linejoin="round" stroke-linecap="round"/><polyline points="747.8,223.0 750.1,221.7 754.2,224.1 759.3,221.7" fill="none" stroke="#fde49c" stroke-width="1.2" stroke-linejoin="round" stroke-linecap="round"/><polyline points="797.9,266.0 804.8,263.6 813.1,258.8 819.2,255.9" fill="none" stroke="#fde49c" stroke-width="1.2" stroke-linejoin="round" stroke-linecap="round"/><polyline points="731.6,320.8 737.6,322.6 741.4,320.7 745.7,319.8" fill="none" stroke="#fde49c" stroke-width="1.2" stroke-linejoin="round" stroke-linecap="round"/><polyline points="748.5,254.6 753.4,252.6 759.4,250.5 763.6,246.6" fill="none" stroke="#fde49c" stroke-width="1.2" stroke-linejoin="round" stroke-linecap="round"/><polyline points="747.3,291.9 751.6,287.0 756.6,283.6 758.4,279.8" fill="none" stroke="#fde49c" stroke-width="1.2" stroke-linejoin="round" stroke-linecap="round"/><polyline points="756.4,305.7 756.5,311.9 757.4,315.3 756.1,323.2" fill="none" stroke="#fde49c" stroke-width="1.2" stroke-linejoin="round" stroke-linecap="round"/><polyline points="771.6,285.1 778.4,285.4 787.1,286.9 795.1,289.1" fill="none" stroke="#fde49c" stroke-width="1.2" stroke-linejoin="round" stroke-linecap="round"/><polyline points="782.7,240.4 782.2,248.3 783.6,255.3 786.6,261.5" fill="none" stroke="#fde49c" stroke-width="1.2" stroke-linejoin="round" stroke-linecap="round"/><polyline points="754.3,314.3 757.5,319.9 759.5,322.9 762.5,328.7" fill="none" stroke="#fde49c" stroke-width="1.2" stroke-linejoin="round" stroke-linecap="round"/><polyline points="780.4,250.4 788.1,251.2 793.8,251.8 799.5,255.2" fill="none" stroke="#fde49c" stroke-width="1.2" stroke-linejoin="round" stroke-linecap="round"/><polyline points="729.8,247.4 734.6,247.5 738.5,247.8 740.6,247.0" fill="none" stroke="#fde49c" stroke-width="1.2" stroke-linejoin="round" stroke-linecap="round"/><polyline points="753.0,248.8 757.0,246.4 758.6,247.0 761.8,245.5" fill="none" stroke="#fde49c" stroke-width="1.2" stroke-linejoin="round" stroke-linecap="round"/><polyline points="784.7,229.4 784.2,235.9 783.7,239.8 781.0,244.1" fill="none" stroke="#fde49c" stroke-width="1.2" stroke-linejoin="round" stroke-linecap="round"/><polyline points="771.6,222.8 776.2,225.9 781.3,224.4 787.2,227.3" fill="none" stroke="#fde49c" stroke-width="1.2" stroke-linejoin="round" stroke-linecap="round"/><polyline points="744.5,265.8 745.3,270.4 745.3,274.0 749.0,275.9" fill="none" stroke="#fde49c" stroke-width="1.2" stroke-linejoin="round" stroke-linecap="round"/><polyline points="723.8,318.0 727.3,312.7 728.4,309.4 734.0,304.4" fill="none" stroke="#fde49c" stroke-width="1.2" stroke-linejoin="round" stroke-linecap="round"/><polyline points="738.3,286.1 744.0,289.5 751.7,290.3 759.0,294.4" fill="none" stroke="#fde49c" stroke-width="1.2" stroke-linejoin="round" stroke-linecap="round"/><polyline points="756.6,241.3 756.0,247.0 754.8,252.4 752.7,256.6" fill="none" stroke="#fde49c" stroke-width="1.2" stroke-linejoin="round" stroke-linecap="round"/><polyline points="775.9,269.1 776.3,274.2 776.2,280.1 775.1,285.0" fill="none" stroke="#fde49c" stroke-width="1.2" stroke-linejoin="round" stroke-linecap="round"/><polyline points="764.8,267.3 772.2,272.8 776.3,275.3 785.2,280.7" fill="none" stroke="#fde49c" stroke-width="1.2" stroke-linejoin="round" stroke-linecap="round"/><polyline points="778.9,292.0 784.6,291.0 789.1,287.9 796.2,283.7" fill="none" stroke="#fde49c" stroke-width="1.2" stroke-linejoin="round" stroke-linecap="round"/><polyline points="719.7,327.0 723.1,326.9 728.6,324.5 731.0,319.9" fill="none" stroke="#fde49c" stroke-width="1.2" stroke-linejoin="round" stroke-linecap="round"/><polyline points="746.1,284.1 752.2,278.6 757.1,274.2 760.9,270.3" fill="none" stroke="#fde49c" stroke-width="1.2" stroke-linejoin="round" stroke-linecap="round"/><polyline points="759.3,294.5 765.6,292.8 771.0,288.8 777.4,288.0" fill="none" stroke="#fde49c" stroke-width="1.2" stroke-linejoin="round" stroke-linecap="round"/><polyline points="778.2,226.4 780.2,232.0 782.3,238.1 786.3,244.1" fill="none" stroke="#fde49c" stroke-width="1.2" stroke-linejoin="round" stroke-linecap="round"/><polyline points="766.0,296.6 766.6,301.1 765.1,309.2 766.2,316.8" fill="none" stroke="#fde49c" stroke-width="1.2" stroke-linejoin="round" stroke-linecap="round"/><polyline points="744.9,264.6 751.6,263.6 760.9,262.5 767.0,261.6" fill="none" stroke="#fde49c" stroke-width="1.2" stroke-linejoin="round" stroke-linecap="round"/><polyline points="791.6,244.6 798.7,247.1 807.4,251.7 813.6,255.0" fill="none" stroke="#fde49c" stroke-width="1.2" stroke-linejoin="round" stroke-linecap="round"/><polyline points="792.1,239.2 797.8,239.7 801.7,241.4 808.4,243.2" fill="none" stroke="#fde49c" stroke-width="1.2" stroke-linejoin="round" stroke-linecap="round"/><polyline points="768.1,285.7 769.9,291.4 772.3,293.1 775.3,296.1" fill="none" stroke="#fde49c" stroke-width="1.2" stroke-linejoin="round" stroke-linecap="round"/><polyline points="793.7,272.2 794.7,278.0 795.7,284.8 797.1,290.1" fill="none" stroke="#fde49c" stroke-width="1.2" stroke-linejoin="round" stroke-linecap="round"/><polyline points="740.8,260.6 746.0,263.8 750.2,265.3 752.7,267.2" fill="none" stroke="#fde49c" stroke-width="1.2" stroke-linejoin="round" stroke-linecap="round"/><polyline points="771.0,267.6 774.1,272.7 774.8,279.3 777.8,286.4" fill="none" stroke="#fde49c" stroke-width="1.2" stroke-linejoin="round" stroke-linecap="round"/><polyline points="775.5,210.1 776.3,217.2 778.4,226.0 779.4,233.6" fill="none" stroke="#fde49c" stroke-width="1.2" stroke-linejoin="round" stroke-linecap="round"/><polyline points="741.7,255.7 744.9,258.5 750.3,258.5 753.7,258.5" fill="none" stroke="#fde49c" stroke-width="1.2" stroke-linejoin="round" stroke-linecap="round"/><polyline points="741.5,248.2 745.1,246.2 748.7,244.9 754.3,243.0" fill="none" stroke="#fde49c" stroke-width="1.2" stroke-linejoin="round" stroke-linecap="round"/><polyline points="739.1,292.3 740.8,293.3 743.8,292.7 746.8,292.2" fill="none" stroke="#fde49c" stroke-width="1.2" stroke-linejoin="round" stroke-linecap="round"/><polyline points="731.5,303.4 733.8,308.3 732.4,312.5 734.0,317.8" fill="none" stroke="#fde49c" stroke-width="1.2" stroke-linejoin="round" stroke-linecap="round"/><polyline points="751.4,234.6 751.3,242.4 751.4,250.4 750.3,257.9" fill="none" stroke="#fde49c" stroke-width="1.2" stroke-linejoin="round" stroke-linecap="round"/><polyline points="716.0,309.3 721.7,312.3 727.3,315.6 731.0,319.1" fill="none" stroke="#fde49c" stroke-width="1.2" stroke-linejoin="round" stroke-linecap="round"/><polyline points="753.1,227.7 760.1,230.0 764.7,232.3 768.6,233.0" fill="none" stroke="#fde49c" stroke-width="1.2" stroke-linejoin="round" stroke-linecap="round"/><polyline points="775.5,244.8 776.0,251.3 775.7,256.3 778.0,260.7" fill="none" stroke="#fde49c" stroke-width="1.2" stroke-linejoin="round" stroke-linecap="round"/><polyline points="728.0,312.0 735.7,314.6 745.4,313.8 751.8,317.2" fill="none" stroke="#fde49c" stroke-width="1.2" stroke-linejoin="round" stroke-linecap="round"/><polyline points="742.5,296.3 744.5,296.5 750.7,294.9 753.7,294.2" fill="none" stroke="#fde49c" stroke-width="1.2" stroke-linejoin="round" stroke-linecap="round"/><polyline points="767.4,302.4 770.1,300.2 775.0,296.8 777.4,293.9" fill="none" stroke="#fde49c" stroke-width="1.2" stroke-linejoin="round" stroke-linecap="round"/><polyline points="734.8,301.0 734.3,308.0 736.8,316.4 735.4,323.2" fill="none" stroke="#fde49c" stroke-width="1.2" stroke-linejoin="round" stroke-linecap="round"/><polyline points="782.7,264.9 784.0,269.2 786.3,273.7 785.6,279.4" fill="none" stroke="#fde49c" stroke-width="1.2" stroke-linejoin="round" stroke-linecap="round"/><polyline points="751.1,270.6 757.9,272.9 766.5,274.8 772.1,277.1" fill="none" stroke="#fde49c" stroke-width="1.2" stroke-linejoin="round" stroke-linecap="round"/><polyline points="757.3,254.3 756.3,260.0 754.9,266.6 754.0,271.7" fill="none" stroke="#fde49c" stroke-width="1.2" stroke-linejoin="round" stroke-linecap="round"/><polyline points="789.4,264.8 791.1,269.6 789.1,274.9 789.8,283.4" fill="none" stroke="#fde49c" stroke-width="1.2" stroke-linejoin="round" stroke-linecap="round"/><polyline points="783.0,239.0 787.8,238.1 795.4,236.2 801.5,233.9" fill="none" stroke="#fde49c" stroke-width="1.2" stroke-linejoin="round" stroke-linecap="round"/><polyline points="781.8,253.3 781.2,260.1 779.3,265.4 778.3,271.6" fill="none" stroke="#fde49c" stroke-width="1.2" stroke-linejoin="round" stroke-linecap="round"/><polyline points="754.2,232.4 758.4,231.2 762.8,232.1 769.2,231.3" fill="none" stroke="#fde49c" stroke-width="1.2" stroke-linejoin="round" stroke-linecap="round"/><polyline points="792.9,241.0 797.7,247.9 799.8,251.2 805.7,258.2" fill="none" stroke="#fde49c" stroke-width="1.2" stroke-linejoin="round" stroke-linecap="round"/><polyline points="764.8,295.6 769.6,300.3 770.7,308.0 773.0,312.3" fill="none" stroke="#fde49c" stroke-width="1.2" stroke-linejoin="round" stroke-linecap="round"/><polyline points="838.6,277.1 841.5,283.9 843.0,289.6 847.7,298.6" fill="none" stroke="#fde49c" stroke-width="1.2" stroke-linejoin="round" stroke-linecap="round"/><polyline points="844.7,254.5 850.3,250.0 854.1,245.9 858.5,239.7" fill="none" stroke="#fde49c" stroke-width="1.2" stroke-linejoin="round" stroke-linecap="round"/><polyline points="876.8,263.8 876.3,266.5 879.0,271.7 877.8,276.1" fill="none" stroke="#fde49c" stroke-width="1.2" stroke-linejoin="round" stroke-linecap="round"/><polyline points="897.3,271.7 905.4,274.7 913.0,275.3 920.4,279.5" fill="none" stroke="#fde49c" stroke-width="1.2" stroke-linejoin="round" stroke-linecap="round"/><polyline points="828.4,288.2 833.4,283.0 839.0,278.4 843.7,273.4" fill="none" stroke="#fde49c" stroke-width="1.2" stroke-linejoin="round" stroke-linecap="round"/><polyline points="854.4,292.4 860.2,293.3 863.8,293.3 871.5,293.6" fill="none" stroke="#fde49c" stroke-width="1.2" stroke-linejoin="round" stroke-linecap="round"/><polyline points="882.7,276.5 889.9,279.5 898.1,278.7 907.8,279.8" fill="none" stroke="#fde49c" stroke-width="1.2" stroke-linejoin="round" stroke-linecap="round"/><polyline points="902.0,255.3 905.4,263.6 908.3,272.0 907.1,279.2" fill="none" stroke="#fde49c" stroke-width="1.2" stroke-linejoin="round" stroke-linecap="round"/><polyline points="837.2,242.2 843.9,247.8 850.8,250.9 856.0,255.4" fill="none" stroke="#fde49c" stroke-width="1.2" stroke-linejoin="round" stroke-linecap="round"/><polyline points="851.5,272.8 859.0,273.7 865.0,275.2 870.0,277.7" fill="none" stroke="#fde49c" stroke-width="1.2" stroke-linejoin="round" stroke-linecap="round"/><polyline points="838.5,264.3 840.6,267.6 844.5,274.5 847.6,281.2" fill="none" stroke="#fde49c" stroke-width="1.2" stroke-linejoin="round" stroke-linecap="round"/><polyline points="829.9,275.5 835.2,271.3 840.5,269.6 845.9,266.1" fill="none" stroke="#fde49c" stroke-width="1.2" stroke-linejoin="round" stroke-linecap="round"/><polyline points="833.7,276.9 837.5,285.1 845.2,291.4 849.9,297.9" fill="none" stroke="#fde49c" stroke-width="1.2" stroke-linejoin="round" stroke-linecap="round"/><polyline points="845.6,240.7 847.7,244.2 854.3,248.1 857.5,251.6" fill="none" stroke="#fde49c" stroke-width="1.2" stroke-linejoin="round" stroke-linecap="round"/><polyline points="845.3,181.6 847.3,178.7 854.6,174.9 858.4,171.7" fill="none" stroke="#fde49c" stroke-width="1.2" stroke-linejoin="round" stroke-linecap="round"/><polyline points="811.4,177.9 815.2,176.9 817.5,178.9 822.4,177.2" fill="none" stroke="#fde49c" stroke-width="1.2" stroke-linejoin="round" stroke-linecap="round"/><polyline points="811.8,175.2 815.6,176.2 819.6,175.7 824.7,176.4" fill="none" stroke="#fde49c" stroke-width="1.2" stroke-linejoin="round" stroke-linecap="round"/><polyline points="802.3,181.1 809.1,181.3 815.1,183.4 820.5,181.3" fill="none" stroke="#fde49c" stroke-width="1.2" stroke-linejoin="round" stroke-linecap="round"/><polyline points="829.2,138.3 832.8,135.9 836.4,133.6 841.5,131.0" fill="none" stroke="#fde49c" stroke-width="1.2" stroke-linejoin="round" stroke-linecap="round"/><polyline points="822.6,177.0 823.3,180.7 822.7,184.7 822.4,192.1" fill="none" stroke="#fde49c" stroke-width="1.2" stroke-linejoin="round" stroke-linecap="round"/><polyline points="855.4,118.0 856.2,123.8 859.9,130.4 861.0,137.2" fill="none" stroke="#fde49c" stroke-width="1.2" stroke-linejoin="round" stroke-linecap="round"/><polyline points="803.3,197.1 806.5,199.6 811.4,199.9 813.7,202.2" fill="none" stroke="#fde49c" stroke-width="1.2" stroke-linejoin="round" stroke-linecap="round"/><polyline points="835.4,176.2 840.8,179.3 844.0,183.7 850.4,189.1" fill="none" stroke="#fde49c" stroke-width="1.2" stroke-linejoin="round" stroke-linecap="round"/><polyline points="808.6,172.3 814.9,171.8 820.4,169.7 830.0,166.9" fill="none" stroke="#fde49c" stroke-width="1.2" stroke-linejoin="round" stroke-linecap="round"/><polyline points="802.9,185.7 805.8,189.9 810.4,192.9 815.3,198.4" fill="none" stroke="#fde49c" stroke-width="1.2" stroke-linejoin="round" stroke-linecap="round"/><polyline points="817.9,167.8 818.4,169.3 821.0,174.1 822.9,176.8" fill="none" stroke="#fde49c" stroke-width="1.2" stroke-linejoin="round" stroke-linecap="round"/><polyline points="849.2,136.7 853.5,134.0 859.7,130.6 865.4,126.5" fill="none" stroke="#fde49c" stroke-width="1.2" stroke-linejoin="round" stroke-linecap="round"/><polyline points="843.2,133.5 843.1,138.5 841.7,144.1 842.9,150.4" fill="none" stroke="#fde49c" stroke-width="1.2" stroke-linejoin="round" stroke-linecap="round"/><polyline points="826.5,135.3 829.2,130.9 835.2,129.0 838.6,124.6" fill="none" stroke="#fde49c" stroke-width="1.2" stroke-linejoin="round" stroke-linecap="round"/><polyline points="829.6,113.5 830.8,117.6 831.2,124.2 830.7,131.6" fill="none" stroke="#fde49c" stroke-width="1.2" stroke-linejoin="round" stroke-linecap="round"/><polyline points="812.1,119.5 811.8,123.2 811.8,126.5 813.2,129.4" fill="none" stroke="#fde49c" stroke-width="1.2" stroke-linejoin="round" stroke-linecap="round"/><polyline points="828.7,207.7 833.1,209.4 836.1,211.3 838.0,210.3" fill="none" stroke="#fde49c" stroke-width="1.2" stroke-linejoin="round" stroke-linecap="round"/><polyline points="816.6,119.4 822.4,120.4 829.3,116.5 836.1,116.0" fill="none" stroke="#fde49c" stroke-width="1.2" stroke-linejoin="round" stroke-linecap="round"/><polyline points="835.1,192.1 835.7,199.3 835.4,204.1 834.1,207.1" fill="none" stroke="#fde49c" stroke-width="1.2" stroke-linejoin="round" stroke-linecap="round"/><polyline points="809.3,148.6 813.5,146.5 817.0,142.8 819.3,140.0" fill="none" stroke="#fde49c" stroke-width="1.2" stroke-linejoin="round" stroke-linecap="round"/><polyline points="825.8,163.2 833.0,165.9 837.3,165.3 841.0,165.2" fill="none" stroke="#fde49c" stroke-width="1.2" stroke-linejoin="round" stroke-linecap="round"/><polyline points="878.7,180.4 881.7,183.6 883.8,186.8 882.8,189.1" fill="none" stroke="#fde49c" stroke-width="1.2" stroke-linejoin="round" stroke-linecap="round"/><polyline points="929.1,177.1 929.1,180.2 928.4,186.3 929.3,190.6" fill="none" stroke="#fde49c" stroke-width="1.2" stroke-linejoin="round" stroke-linecap="round"/><polyline points="922.8,176.7 925.1,175.1 927.9,173.2 929.3,169.6" fill="none" stroke="#fde49c" stroke-width="1.2" stroke-linejoin="round" stroke-linecap="round"/><polyline points="853.7,186.0 860.9,187.1 864.2,190.1 871.3,191.1" fill="none" stroke="#fde49c" stroke-width="1.2" stroke-linejoin="round" stroke-linecap="round"/><polyline points="902.8,180.8 906.0,179.2 910.5,180.2 916.7,177.0" fill="none" stroke="#fde49c" stroke-width="1.2" stroke-linejoin="round" stroke-linecap="round"/><polyline points="897.0,179.6 903.8,181.3 907.5,183.8 915.6,183.3" fill="none" stroke="#fde49c" stroke-width="1.2" stroke-linejoin="round" stroke-linecap="round"/><polyline points="934.2,165.3 935.5,172.0 932.9,175.1 935.3,177.7" fill="none" stroke="#fde49c" stroke-width="1.2" stroke-linejoin="round" stroke-linecap="round"/><polyline points="952.2,173.6 957.6,171.8 960.6,171.7 962.2,170.0" fill="none" stroke="#fde49c" stroke-width="1.2" stroke-linejoin="round" stroke-linecap="round"/><polyline points="869.7,173.4 873.4,177.3 874.7,183.5 880.1,187.6" fill="none" stroke="#fde49c" stroke-width="1.2" stroke-linejoin="round" stroke-linecap="round"/><polyline points="945.1,167.1 944.9,170.7 947.1,176.7 946.7,178.9" fill="none" stroke="#fde49c" stroke-width="1.2" stroke-linejoin="round" stroke-linecap="round"/><polyline points="912.1,180.5 917.0,181.1 920.5,184.7 924.3,185.2" fill="none" stroke="#fde49c" stroke-width="1.2" stroke-linejoin="round" stroke-linecap="round"/><polyline points="920.8,184.1 923.8,182.0 924.4,179.9 929.0,179.0" fill="none" stroke="#fde49c" stroke-width="1.2" stroke-linejoin="round" stroke-linecap="round"/><polyline points="620.5,402.3 625.0,407.3 627.9,411.1 630.4,416.7" fill="none" stroke="#fde49c" stroke-width="1.2" stroke-linejoin="round" stroke-linecap="round"/><polyline points="594.8,442.0 592.8,446.7 595.6,452.6 593.3,458.8" fill="none" stroke="#fde49c" stroke-width="1.2" stroke-linejoin="round" stroke-linecap="round"/><polyline points="586.7,413.4 587.3,416.2 588.5,423.0 586.9,429.5" fill="none" stroke="#fde49c" stroke-width="1.2" stroke-linejoin="round" stroke-linecap="round"/><polyline points="572.9,407.0 575.3,400.3 580.7,398.0 582.4,392.7" fill="none" stroke="#fde49c" stroke-width="1.2" stroke-linejoin="round" stroke-linecap="round"/><polyline points="587.2,440.1 591.3,442.6 595.7,442.8 601.2,446.3" fill="none" stroke="#fde49c" stroke-width="1.2" stroke-linejoin="round" stroke-linecap="round"/><polyline points="628.4,408.2 634.6,406.6 638.8,408.0 642.7,407.9" fill="none" stroke="#fde49c" stroke-width="1.2" stroke-linejoin="round" stroke-linecap="round"/><polyline points="627.6,422.2 633.6,418.6 639.4,416.9 645.1,415.0" fill="none" stroke="#fde49c" stroke-width="1.2" stroke-linejoin="round" stroke-linecap="round"/><polyline points="585.5,431.9 588.3,437.4 590.7,444.5 592.8,450.5" fill="none" stroke="#fde49c" stroke-width="1.2" stroke-linejoin="round" stroke-linecap="round"/><polyline points="623.5,402.1 629.4,399.7 632.9,400.2 639.5,398.7" fill="none" stroke="#fde49c" stroke-width="1.2" stroke-linejoin="round" stroke-linecap="round"/><polyline points="609.3,415.7 609.6,418.1 612.1,422.3 613.4,426.8" fill="none" stroke="#fde49c" stroke-width="1.2" stroke-linejoin="round" stroke-linecap="round"/><polyline points="643.8,404.4 644.0,409.2 644.3,415.3 645.9,419.8" fill="none" stroke="#fde49c" stroke-width="1.2" stroke-linejoin="round" stroke-linecap="round"/><polyline points="638.7,405.1 644.6,405.3 650.2,410.2 655.3,412.7" fill="none" stroke="#fde49c" stroke-width="1.2" stroke-linejoin="round" stroke-linecap="round"/><polyline points="573.4,420.0 578.7,419.2 580.6,418.4 585.0,415.6" fill="none" stroke="#fde49c" stroke-width="1.2" stroke-linejoin="round" stroke-linecap="round"/><polyline points="584.9,415.2 589.3,416.7 596.2,418.0 599.1,421.3" fill="none" stroke="#fde49c" stroke-width="1.2" stroke-linejoin="round" stroke-linecap="round"/><polyline points="585.7,420.8 591.3,426.1 599.7,431.0 604.5,435.0" fill="none" stroke="#fde49c" stroke-width="1.2" stroke-linejoin="round" stroke-linecap="round"/><polyline points="592.7,412.1 600.4,412.4 606.0,415.7 612.7,416.4" fill="none" stroke="#fde49c" stroke-width="1.2" stroke-linejoin="round" stroke-linecap="round"/><polyline points="618.6,396.5 622.2,399.1 625.4,401.3 629.2,402.2" fill="none" stroke="#fde49c" stroke-width="1.2" stroke-linejoin="round" stroke-linecap="round"/><polyline points="583.7,435.1 590.8,434.7 595.4,431.3 600.0,429.1" fill="none" stroke="#fde49c" stroke-width="1.2" stroke-linejoin="round" stroke-linecap="round"/><polyline points="706.1,329.0 710.8,325.1 714.7,322.3 719.6,319.6" fill="none" stroke="#fde49c" stroke-width="1.2" stroke-linejoin="round" stroke-linecap="round"/><polyline points="693.3,317.3 699.4,316.4 705.3,318.6 712.0,317.0" fill="none" stroke="#fde49c" stroke-width="1.2" stroke-linejoin="round" stroke-linecap="round"/><polyline points="689.1,295.7 693.6,302.1 697.5,304.9 702.9,309.7" fill="none" stroke="#fde49c" stroke-width="1.2" stroke-linejoin="round" stroke-linecap="round"/><polyline points="707.4,308.2 710.9,313.2 711.9,317.3 716.2,323.1" fill="none" stroke="#fde49c" stroke-width="1.2" stroke-linejoin="round" stroke-linecap="round"/><polyline points="725.0,300.6 730.7,304.4 736.0,306.8 738.9,312.6" fill="none" stroke="#fde49c" stroke-width="1.2" stroke-linejoin="round" stroke-linecap="round"/><polyline points="731.4,315.2 729.7,320.0 729.0,325.7 727.6,332.8" fill="none" stroke="#fde49c" stroke-width="1.2" stroke-linejoin="round" stroke-linecap="round"/><polyline points="704.8,313.7 711.9,311.3 715.9,310.1 721.3,308.7" fill="none" stroke="#fde49c" stroke-width="1.2" stroke-linejoin="round" stroke-linecap="round"/><polyline points="691.5,310.1 697.7,310.3 703.8,308.7 709.3,307.9" fill="none" stroke="#fde49c" stroke-width="1.2" stroke-linejoin="round" stroke-linecap="round"/><polyline points="699.2,310.2 698.5,316.6 700.8,320.2 699.5,323.2" fill="none" stroke="#fde49c" stroke-width="1.2" stroke-linejoin="round" stroke-linecap="round"/><polyline points="721.7,339.3 728.4,338.1 733.3,334.2 738.0,334.1" fill="none" stroke="#fde49c" stroke-width="1.2" stroke-linejoin="round" stroke-linecap="round"/><polyline points="699.6,305.6 705.2,301.4 709.7,300.4 712.8,295.1" fill="none" stroke="#fde49c" stroke-width="1.2" stroke-linejoin="round" stroke-linecap="round"/><polyline points="718.1,291.7 721.0,293.3 725.1,299.6 730.6,303.5" fill="none" stroke="#fde49c" stroke-width="1.2" stroke-linejoin="round" stroke-linecap="round"/><polyline points="706.3,238.9 710.0,238.8 716.4,235.5 718.5,235.0" fill="none" stroke="#fde49c" stroke-width="1.2" stroke-linejoin="round" stroke-linecap="round"/><polyline points="712.1,252.3 715.9,251.3 720.0,249.6 724.9,246.5" fill="none" stroke="#fde49c" stroke-width="1.2" stroke-linejoin="round" stroke-linecap="round"/><polyline points="707.4,226.9 713.7,227.2 719.4,229.7 722.4,230.1" fill="none" stroke="#fde49c" stroke-width="1.2" stroke-linejoin="round" stroke-linecap="round"/><polyline points="723.6,236.0 726.6,231.7 729.3,225.8 732.7,222.1" fill="none" stroke="#fde49c" stroke-width="1.2" stroke-linejoin="round" stroke-linecap="round"/><polyline points="724.0,249.3 730.5,253.3 735.1,258.1 741.0,261.6" fill="none" stroke="#fde49c" stroke-width="1.2" stroke-linejoin="round" stroke-linecap="round"/><polyline points="700.0,260.3 703.0,259.6 706.8,260.1 713.3,257.7" fill="none" stroke="#fde49c" stroke-width="1.2" stroke-linejoin="round" stroke-linecap="round"/><polyline points="720.6,223.7 727.4,226.6 734.4,230.0 740.7,230.5" fill="none" stroke="#fde49c" stroke-width="1.2" stroke-linejoin="round" stroke-linecap="round"/><polyline points="720.1,233.4 720.3,231.6 724.2,229.6 728.1,227.9" fill="none" stroke="#fde49c" stroke-width="1.2" stroke-linejoin="round" stroke-linecap="round"/><polyline points="731.3,240.4 736.9,237.6 741.8,235.8 745.0,231.8" fill="none" stroke="#fde49c" stroke-width="1.2" stroke-linejoin="round" stroke-linecap="round"/><polyline points="726.3,225.6 725.8,230.1 726.6,234.2 726.1,239.7" fill="none" stroke="#fde49c" stroke-width="1.2" stroke-linejoin="round" stroke-linecap="round"/><polyline points="838,222 847.7,227.7 1012,184.6" fill="none" stroke="#8a9aa8" stroke-width="0.8" stroke-dasharray="2,2"/><polyline points="915,302 950,289 982,281 1012,272" fill="none" stroke="#d8f0c8" stroke-width="1" stroke-dasharray="2,1"/><polyline points="748,336 770,328 795,318 820,320" fill="none" stroke="#8a9aa8" stroke-width="0.8" stroke-dasharray="2,2"/><polyline points="840,268 860,262" fill="none" stroke="#8a9aa8" stroke-width="0.8" stroke-dasharray="2,2"/><polyline points="805,196 795,170 790,150" fill="none" stroke="#999" stroke-width="0.8" stroke-dasharray="2,2"/><polyline points="853,216 875,192 864,140 862,116" fill="none" stroke="#999" stroke-width="0.8" stroke-dasharray="2,2"/><polyline points="700,116 745,130 760,155" fill="none" stroke="#999" stroke-width="0.8" stroke-dasharray="2,2"/></svg><div class="a" style="left:575px;top:116px;width:437px;height:338px;overflow:hidden">
<div class="ml" style="left:281px;top:-7.1px;font-size:12.3px">Danbury</div>
<div class="ml" style="left:322.8px;top:43.8px;font-size:12.3px">Bridgeport</div>
<div class="ml" style="left:262.4px;top:73.9px;font-size:12.5px">Stamford</div>
<div class="ml" style="left:365px;top:13.6px;font-size:12.3px;color:#333">New Haven</div>
<div class="ml" style="left:334.3px;top:145px;font-size:10.5px;color:#333">Long Island</div>
<div class="ml" style="left:176.5px;top:149.5px;font-size:14.5px;letter-spacing:0.3px;color:#2a2a2a;-webkit-text-stroke:0.3px #2a2a2a;text-shadow:0 0 2px #fff,0 0 2px #fff,0 0 2px #fff,0 0 1px #fff">New York</div>
<div class="ml" style="left:118px;top:196.8px;font-size:12.1px">Edison</div>
<div class="ml" style="left:68.6px;top:235.5px;font-size:11.5px">Princeton</div>
<div class="ml" style="left:55px;top:264.4px;font-size:12.5px;color:#333">Trenton</div>
<div class="ml" style="left:172.7px;top:302.7px;font-size:12px">Brick</div>
<div class="ml" style="left:-1px;top:158.5px;font-size:12px">on</div>
<div class="ml" style="left:0px;top:323.3px;font-size:13.5px;font-weight:bold;color:#333">delphia</div>
<div class="ml" style="left:143.6px;top:325px;font-size:12px;color:#666">Toms River</div>
<div class="cd" style="left:303px;top:8px"></div>
<div class="cd" style="left:349.7px;top:57.9px"></div>
<div class="cd" style="left:288.3px;top:87.2px"></div>
<div class="cd" style="left:135.1px;top:211.2px"></div>
<div class="cd" style="left:90.3px;top:248.2px"></div>
<div class="cd" style="left:73.5px;top:278.8px;width:6px;height:6px;border-width:1.5px;border-color:#333"></div>
<div class="cd" style="left:183.1px;top:316.8px"></div>
<div class="cd" style="left:205.5px;top:165.8px;width:7px;height:7px;border-width:1.6px;border-color:#222"></div>
</div>
<svg class="a" style="left:0;top:0" width="1050" height="656" viewBox="0 0 1050 656">
<defs>
<g id="ish"><path d="M0,1.2 Q1.2,0 2.5,1 Q3.7,0 5,1 Q6.2,0 7.5,1 Q8.8,0 10,1 Q11.3,0 12.5,1 Q13.8,0 15,1.2 L15,3 L0,3 Z" fill="#d8423c"/><path d="M0,3.6 H15 V8.8 Q15,12.8 7.5,14.8 Q0,12.8 0,8.8 Z" fill="#3a70c4"/></g>
<g id="ishw"><path d="M0,1.2 Q1.5,0 3,1 Q4.5,0 6,1 Q7.5,0 9,1 Q10.5,0 12,1 Q13.5,0 15,1 Q16.5,0 18,1 Q19.5,0 21,1.2 L21,3 L0,3 Z" fill="#d8423c"/><path d="M0,3.6 H21 V8.8 Q21,12.8 10.5,14.8 Q0,12.8 0,8.8 Z" fill="#3a70c4"/></g>
</defs>
<g font-family="Liberation Sans" font-weight="bold" fill="#fff" text-anchor="middle" font-size="9.5">
<use href="#ish" x="613" y="227.7"/><text x="620.5" y="239.6">80</text>
<use href="#ishw" x="712.3" y="225.5"/><text x="722.8" y="237.6" font-size="9">287</text>
<use href="#ish" x="716.8" y="242"/><text x="724.3" y="253.9">80</text>
<use href="#ish" x="600" y="292.6"/><text x="607.5" y="304.5">78</text>
<use href="#ish" x="690" y="292.6"/><text x="697.5" y="304.5">78</text>
<use href="#ish" x="820" y="224"/><text x="827.5" y="235.9">95</text>
<use href="#ish" x="699.4" y="345"/><text x="706.9" y="356.9">95</text>
<use href="#ish" x="667.4" y="400"/><text x="674.9" y="411.9">95</text>
<use href="#ishw" x="701.6" y="404.5"/><text x="712.1" y="416.4" font-size="9">195</text>
<use href="#ishw" x="574.5" y="406.4"/><text x="585" y="418.3" font-size="9">276</text>
<use href="#ishw" x="630.3" y="430"/><text x="640.8" y="441.9" font-size="9">295</text>
</g>
<path d="M624,398.5 Q628,396.5 632,398.5 Q636,396.5 640.5,398.5 L640.5,405 Q640.5,410.5 632.2,412.5 Q624,410.5 624,405 Z" fill="#fff" stroke="#444" stroke-width="1"/>
<text x="632.2" y="408.3" font-family="Liberation Sans" font-size="8" font-weight="bold" fill="#333" text-anchor="middle">1</text>
<path d="M578,116 L578,118 Q585,125.5 592,118 L592,116" fill="#fff" stroke="#444" stroke-width="0.8"/>
</svg>

<div class="a mctl" style="left:585px;top:126px;width:161px;height:39px"></div>
<div class="a" style="left:651px;top:126px;width:1px;height:39px;background:#ebebeb"></div>
<div class="a" style="left:601.5px;top:135px;font-size:17.2px;font-weight:bold;color:#111;letter-spacing:-0.2px">Map</div>
<div class="a" style="left:668px;top:135px;font-size:17.4px;color:#565656">Satellite</div>
<div class="a mctl" style="left:964px;top:126px;width:39px;height:39px"></div>
<svg class="a" style="left:964px;top:126px" width="39" height="39"><path d="M11,16 V11 H16 M23,11 H28 V16 M28,23 V28 H23 M16,28 H11 V23" fill="none" stroke="#666" stroke-width="2.2"/></svg>
<div class="a mctl" style="left:964px;top:283px;width:39px;height:39px"></div>
<svg class="a" style="left:964px;top:283px" width="39" height="39"><circle cx="19" cy="10" r="4.3" fill="#fbad19" stroke="#d68a00" stroke-width="0.6"/><path d="M13,25 L14,17 Q15,14.5 19,14.5 Q23,14.5 24,17 L25,25 L23,25 L22.5,21 L22.5,33 L19.5,33 L19,26 L18.5,33 L15.5,33 L15.5,21 L15,25 Z" fill="#fbad19" stroke="#d68a00" stroke-width="0.6"/><path d="M17.5,17.5 L19,19 L20.5,17.5" fill="none" stroke="#e53935" stroke-width="0.8"/></svg>
<div class="a mctl" style="left:964px;top:353px;width:39px;height:78px"></div>
<div class="a" style="left:969px;top:391px;width:29px;height:1px;background:#e6e6e6"></div>
<svg class="a" style="left:964px;top:353px" width="39" height="78"><path d="M11,18.5 H28 M19.5,10 V27" stroke="#666" stroke-width="3"/><path d="M11,58.5 H28" stroke="#666" stroke-width="3"/></svg>

<div class="a" style="left:740px;top:165.5px;width:107px;height:56.5px;background:#fff;border-radius:2px;box-shadow:0 1px 3px rgba(0,0,0,0.3)"></div>
<svg class="a" style="left:780px;top:221px" width="26" height="26"><path d="M4.8,0 L13,22 L22.2,0 Z" fill="#fff"/><path d="M4.8,0.5 L13,22" stroke="rgba(0,0,0,0.25)" stroke-width="1.2"/></svg>
<div class="a" style="left:753.3px;top:178.5px;font-size:17.2px;font-weight:bold;color:#a52a2a;letter-spacing:-0.3px">Kinsta</div>
<svg class="a" style="left:824px;top:175px" width="12" height="12"><path d="M2,2.2 L9,9.2 M9,2.2 L2,9.2" stroke="#555" stroke-width="1.1"/></svg>

<svg class="a" style="left:775px;top:244px" width="34" height="46" viewBox="0 0 34 46"><defs><linearGradient id="pg" x1="0" y1="0" x2="1" y2="1"><stop offset="0" stop-color="#ffffff"/><stop offset="0.6" stop-color="#f4f4f4"/><stop offset="1" stop-color="#d8d8d8"/></linearGradient><radialGradient id="bg" cx="0.45" cy="0.4" r="0.65"><stop offset="0" stop-color="#74b8f5"/><stop offset="1" stop-color="#3d86d6"/></radialGradient></defs><ellipse cx="21" cy="40" rx="7" ry="2" fill="rgba(0,0,0,0.12)"/><path d="M16.5,40 C13,31 4.5,26 4.5,15 A12,12 0 0 1 28.5,15 C28.5,26 20,31 16.5,40 Z" fill="url(#pg)" style="filter:drop-shadow(0 0 1px rgba(0,0,0,0.25))"/><circle cx="16.6" cy="14.3" r="7.5" fill="url(#bg)"/><path d="M16.6,10 L17.8,13.2 L21,13.4 L18.4,15.4 L19.4,18.6 L16.6,16.7 L13.8,18.6 L14.8,15.4 L12.2,13.4 L15.4,13.2 Z" fill="#a9d3fb"/></svg>

<div class="a" style="left:581px;top:428px;font-size:19px;font-weight:bold;letter-spacing:-0.5px;text-shadow:0 0 2px #fff,0 0 2px #fff"><span style="color:#4285f4">G</span><span style="color:#ea4335">o</span><span style="color:#fbbc05">o</span><span style="color:#4285f4">g</span><span style="color:#34a853">l</span><span style="color:#ea4335">e</span></div>
<div class="a" style="left:737px;top:440px;width:275px;height:14px;background:rgba(255,255,255,0.5)"></div>
<div class="a" style="left:850px;top:440px;width:1px;height:14px;background:rgba(170,218,255,0.9)"></div>
<div class="a" style="left:920px;top:440px;width:1px;height:14px;background:rgba(170,218,255,0.9)"></div>
<div class="a att" style="left:740px">Map data ©2019 Google</div>
<div class="a att" style="left:857px">Terms of Use</div>
<div class="a att" style="left:926px">Report a map error</div>

<div class="a" style="left:575px;top:458px;width:212px;height:31px;border:1px solid #222;background:#fff"></div>
<svg class="a" style="left:635px;top:465px" width="10" height="15" viewBox="0 0 10 15"><path d="M4.8,0.5 C2.2,0.5 0.4,2.5 0.4,5 C0.4,8 4.8,14.5 4.8,14.5 C4.8,14.5 9.2,8 9.2,5 C9.2,2.5 7.4,0.5 4.8,0.5 Z M4.8,3 A2,2 0 1 1 4.79,3 Z" fill="#111" fill-rule="evenodd"/></svg>
<div class="t" style="left:647.00px;top:466.90px;font-size:13.969px;">Save Marker</div>
<div class="a" style="left:794px;top:458px;width:218px;height:31px;border:1px solid #222;background:#fff"></div>
<svg class="a" style="left:849px;top:465px" width="13" height="16" viewBox="0 0 13 16"><path d="M4,0.5 H9 L9.5,2 H12.5 V4 H0.5 V2 H3.5 Z" fill="#111"/><path d="M1.5,5 H11.5 V14.5 Q11.5,15.5 10.5,15.5 H2.5 Q1.5,15.5 1.5,14.5 Z M3.5,6.5 V14 H4.8 V6.5 Z M5.9,6.5 V14 H7.2 V6.5 Z M8.3,6.5 V14 H9.6 V6.5 Z" fill="#111" fill-rule="evenodd"/></svg>
<div class="t" style="left:869.00px;top:466.39px;font-size:14.585px;">Delete Marker</div>
<div class="a" style="left:575px;top:492px;width:437px;height:33px;background:#f3f5f6;border-top:2px solid #e6e8e9"></div>
<div class="t" style="left:580.00px;top:502.66px;font-size:13.058px;color:#72777c">Search by name</div>
<svg class="a" style="left:577px;top:543px" width="10" height="13" viewBox="0 0 10 13"><path d="M1.5,4.5 L4.5,1.5 L7.5,4.5 M1.5,8.5 L4.5,11.5 L7.5,8.5" fill="none" stroke="#bbb" stroke-width="1.5"/></svg>
<div class="t" style="left:610.50px;top:542.66px;font-size:14.500px;font-weight:bold;color:#333;letter-spacing:1.2px"><span style="font-family:Liberation Serif">I</span>D</div>
<div class="t" style="left:683.50px;top:542.66px;font-size:14.500px;font-weight:bold;color:#333;letter-spacing:0.9px"><span style="font-family:Liberation Serif">I</span>con</div>
<div class="t" style="left:794.70px;top:542.66px;font-size:14.500px;font-weight:bold;color:#333;letter-spacing:1.4px">Title</div>
<div class="t" style="left:907.30px;top:542.66px;font-size:14.500px;font-weight:bold;color:#333;letter-spacing:0.5px">Coords</div>
<div class="t" style="left:1001.00px;top:542.66px;font-size:14.500px;font-weight:bold;color:#333;letter-spacing:0px">A</div>
</body></html>
